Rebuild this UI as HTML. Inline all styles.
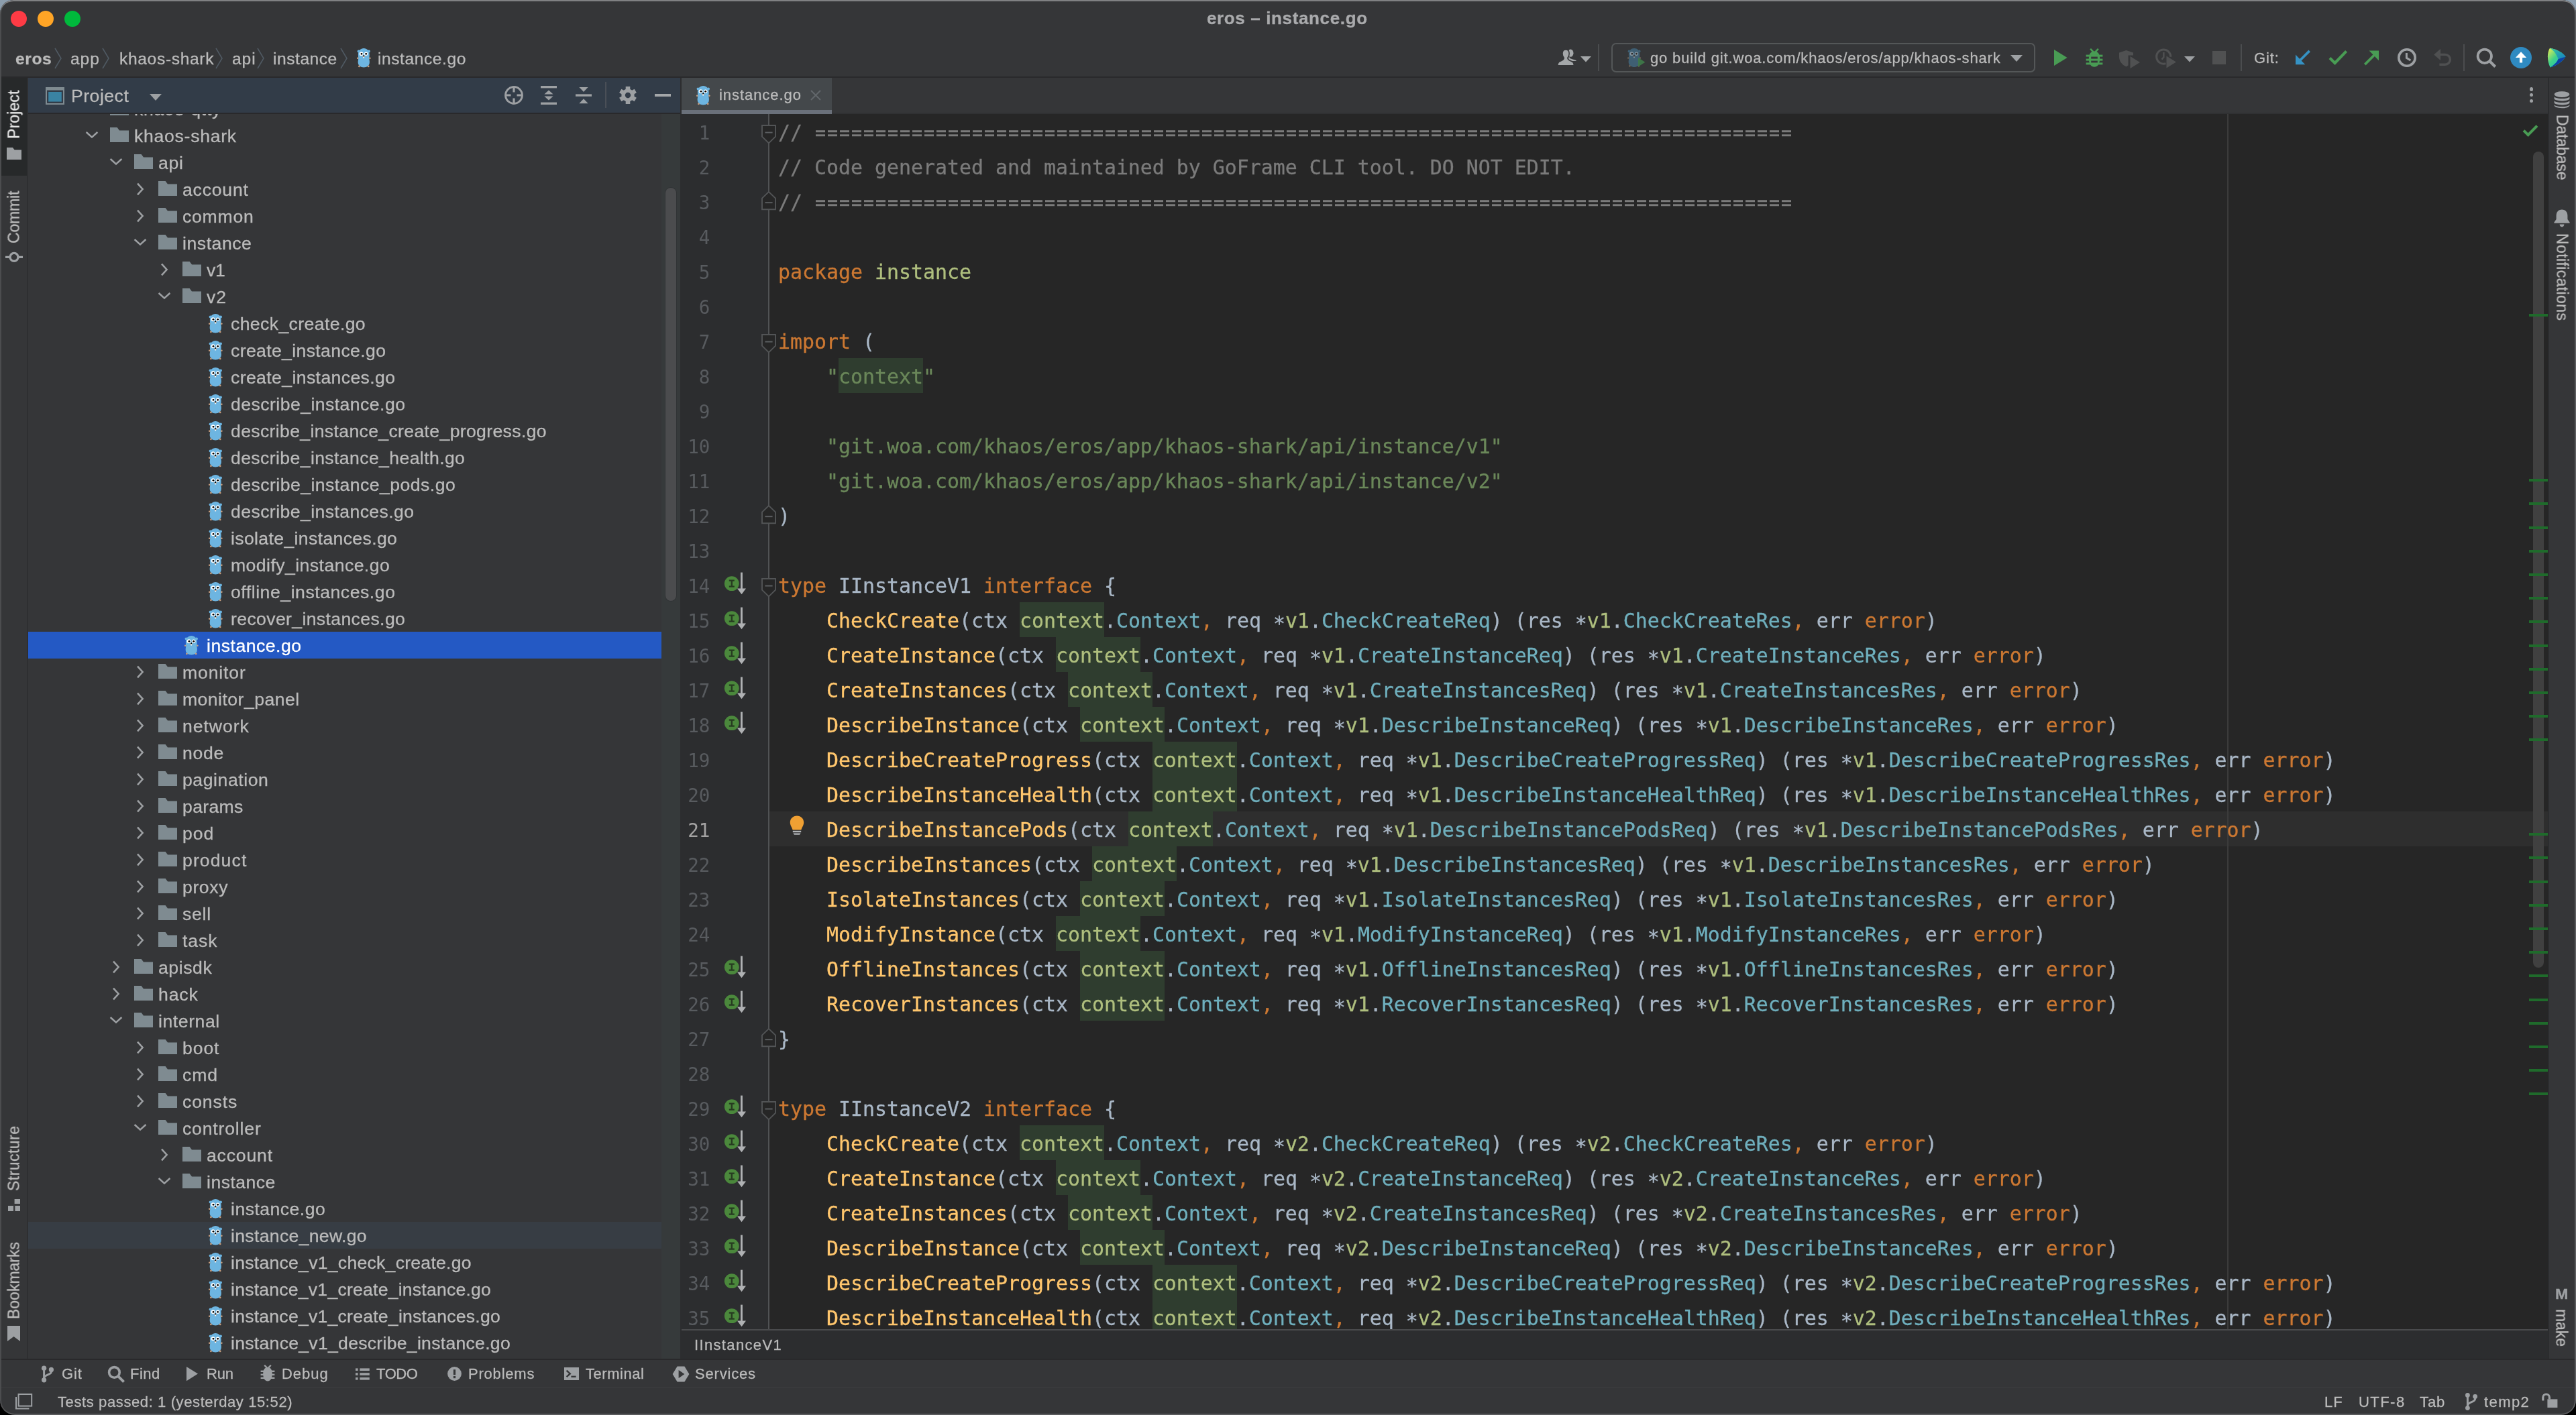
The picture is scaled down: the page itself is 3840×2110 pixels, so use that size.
<!DOCTYPE html>
<html lang="en"><head><meta charset="utf-8"><title>eros – instance.go</title>
<style>
html,body{margin:0;padding:0}
body{width:3840px;height:2110px;overflow:hidden;position:relative;
 background:linear-gradient(#8c9eae 0,#8c9eae 60px,#000 60px,#000 100%);
 font-family:"Liberation Sans",sans-serif}
#win{position:absolute;left:0;top:0;width:3840px;height:2110px;box-sizing:border-box;background:#353638;
 border-radius:20px 20px 22px 22px;overflow:hidden}
#win:after{content:"";position:absolute;left:0;top:0;right:0;bottom:0;border-radius:20px 20px 22px 22px;
 box-shadow:inset 0 2px 0 0 #808183,inset 2px 0 0 0 #4c4d4f,inset -2px 0 0 0 #5c5d5f,inset 0 -2px 0 0 #5a5b5d;pointer-events:none;z-index:50}
#win div,#win span.t,#win svg,#win pre{position:absolute}
span.t{white-space:pre;line-height:1;will-change:transform;-webkit-text-stroke:0.3px}
svg{overflow:visible}
#tree{left:42px;top:170px;width:972px;height:1856px;overflow:hidden}
#editor{background:#262626;overflow:hidden}
#editor .ln{will-change:transform;left:0;width:42.4px;height:52px;text-align:right;font:27.6px/52px "DejaVu Sans Mono","Liberation Mono",monospace}
pre.cl span.as{position:relative;top:4px}
pre.cl span.eq{-webkit-mask-image:repeating-linear-gradient(90deg,transparent 0,transparent 2.1px,#000 2.1px,#000 16px,transparent 16px,transparent 18px);mask-image:repeating-linear-gradient(90deg,transparent 0,transparent 2.1px,#000 2.1px,#000 16px,transparent 16px,transparent 18px)}
pre.cl{will-change:transform;-webkit-text-stroke:0.3px;margin:0;height:52px;font:29.9px/52px "DejaVu Sans Mono","Liberation Mono",monospace;color:#a9b7c6;white-space:pre}
</style></head>
<body>
<div id="win">
<div style="left:16px;top:16px;width:24px;height:24px;border-radius:50%;background:#fe3b45"></div>
<div style="left:56px;top:16px;width:24px;height:24px;border-radius:50%;background:#ffa526"></div>
<div style="left:96px;top:16px;width:24px;height:24px;border-radius:50%;background:#00b93c"></div>
<span class="t " style="left:1799.43px;top:13.99px;font-size:26px;color:#a9aaac;letter-spacing:0.632px;font-weight:bold;">eros – instance.go</span>
<div style="left:0px;top:114px;width:3840px;height:2px;background:#29292b;"></div>
<span class="t " style="left:23.49px;top:76.18px;font-size:24.6px;color:#bbbbbb;letter-spacing:0.617px;font-weight:bold;">eros</span>
<svg style="left:80.6px;top:71px;" width="12" height="32" viewBox="0 0 12 32"><path d="M1 1 L10 16 L1 31" fill="none" stroke="#505a63" stroke-width="1.6"/></svg>
<span class="t " style="left:105.39px;top:76.18px;font-size:24.6px;color:#bbbbbb;letter-spacing:0.900px;">app</span>
<svg style="left:152px;top:71px;" width="12" height="32" viewBox="0 0 12 32"><path d="M1 1 L10 16 L1 31" fill="none" stroke="#505a63" stroke-width="1.6"/></svg>
<span class="t " style="left:177.69px;top:76.18px;font-size:24.6px;color:#bbbbbb;letter-spacing:0.652px;">khaos-shark</span>
<svg style="left:320.6px;top:71px;" width="12" height="32" viewBox="0 0 12 32"><path d="M1 1 L10 16 L1 31" fill="none" stroke="#505a63" stroke-width="1.6"/></svg>
<span class="t " style="left:345.59px;top:76.18px;font-size:24.6px;color:#bbbbbb;letter-spacing:0.900px;">api</span>
<svg style="left:382.8px;top:71px;" width="12" height="32" viewBox="0 0 12 32"><path d="M1 1 L10 16 L1 31" fill="none" stroke="#505a63" stroke-width="1.6"/></svg>
<span class="t " style="left:407.49px;top:76.18px;font-size:24.6px;color:#bbbbbb;letter-spacing:0.527px;">instance</span>
<svg style="left:506.8px;top:71px;" width="12" height="32" viewBox="0 0 12 32"><path d="M1 1 L10 16 L1 31" fill="none" stroke="#505a63" stroke-width="1.6"/></svg>
<svg style="left:531.8px;top:71.8px;" width="20.6" height="28.4" viewBox="0 0 20.6 28.4"><circle cx="2.6" cy="4.4" r="2" fill="#6db5e1"/><circle cx="18" cy="4.4" r="2" fill="#6db5e1"/><path d="M1.9 9.6 C1.9 3.4 5.6 0 10.3 0 C15 0 18.7 3.4 18.7 9.6 C18.7 12.5 18.3 14 18.5 16.5 C19 19.5 19 20.5 18.8 22 C18.4 26 14.6 28.4 10.3 28.4 C6 28.4 2.2 26 1.8 22 C1.6 20.5 1.6 19.5 2.1 16.5 C2.3 14 1.9 12.5 1.9 9.6 Z" fill="#6db5e1"/><circle cx="1.2" cy="14.8" r="1.25" fill="#c79f80"/><circle cx="19.4" cy="14.8" r="1.25" fill="#c79f80"/><circle cx="3.4" cy="26.9" r="1.35" fill="#c79f80"/><circle cx="17.2" cy="26.9" r="1.35" fill="#c79f80"/><circle cx="6.6" cy="8.3" r="2.95" fill="#ffffff"/><circle cx="13.7" cy="8.3" r="2.8" fill="#ffffff"/><circle cx="7" cy="8.3" r="1.4" fill="#000000"/><circle cx="13.7" cy="8.3" r="1.4" fill="#000000"/><ellipse cx="10.2" cy="12.2" rx="1.7" ry="1.1" fill="#c79f80"/><rect x="9.3" y="12.7" width="1.8" height="1.8" fill="#ffffff"/><circle cx="10.2" cy="11.3" r="0.95" fill="#000000"/></svg>
<span class="t " style="left:563.19px;top:76.18px;font-size:24.6px;color:#bbbbbb;letter-spacing:0.559px;">instance.go</span>
<svg style="left:2320px;top:72px;" width="32" height="26" viewBox="0 0 32 26"><g fill="#a4a7a9"><ellipse cx="21.2" cy="7.2" rx="4.3" ry="5.6"/><path d="M18.5 11 C19.5 15 21.5 15.6 24.4 16.4 C27.6 17.2 29.8 17.5 30 19.1 L18 19.1 Z"/></g><path d="M1.7 26.5 C1.9 20.5 4.5 19.5 8 18.2 C10.5 17.2 11.3 16 11.3 14.2 C9.8 12.6 9 10.4 9 8 C9 4.4 11 1.9 14.1 1.9 C17.2 1.9 19.2 4.4 19.2 8 C19.2 10.4 18.4 12.6 16.9 14.2 C16.9 16 17.7 17.2 20.2 18.2 C23.7 19.5 26.3 20.5 26.5 26.5 Z" fill="#a4a7a9" stroke="#353638" stroke-width="1.5"/><rect x="0" y="25" width="32" height="3" fill="#353638"/></svg>
<svg style="left:2356px;top:83.6px;" width="16" height="9" viewBox="0 0 16 9"><path d="M0 0 H16 L8 8.6 Z" fill="#a4a7a9"/></svg>
<div style="left:2382px;top:66px;width:2px;height:40px;background:#4b4d4f;"></div>
<div style="left:2402px;top:64px;width:632px;height:44px;box-sizing:border-box;border:2px solid #545758;border-radius:7px"></div>
<svg style="left:2425.8px;top:71.8px;" width="20.2" height="28" viewBox="0 0 20.6 28.4"><circle cx="2.6" cy="4.4" r="2" fill="#3f5f73"/><circle cx="18" cy="4.4" r="2" fill="#3f5f73"/><path d="M1.9 9.6 C1.9 3.4 5.6 0 10.3 0 C15 0 18.7 3.4 18.7 9.6 C18.7 12.5 18.3 14 18.5 16.5 C19 19.5 19 20.5 18.8 22 C18.4 26 14.6 28.4 10.3 28.4 C6 28.4 2.2 26 1.8 22 C1.6 20.5 1.6 19.5 2.1 16.5 C2.3 14 1.9 12.5 1.9 9.6 Z" fill="#3f5f73"/><circle cx="1.2" cy="14.8" r="1.25" fill="#6b6258"/><circle cx="19.4" cy="14.8" r="1.25" fill="#6b6258"/><circle cx="3.4" cy="26.9" r="1.35" fill="#6b6258"/><circle cx="17.2" cy="26.9" r="1.35" fill="#6b6258"/><circle cx="6.6" cy="8.3" r="2.95" fill="#8796a0"/><circle cx="13.7" cy="8.3" r="2.8" fill="#8796a0"/><circle cx="7" cy="8.3" r="1.4" fill="#2b2b2b"/><circle cx="13.7" cy="8.3" r="1.4" fill="#2b2b2b"/><ellipse cx="10.2" cy="12.2" rx="1.7" ry="1.1" fill="#6b6258"/><rect x="9.3" y="12.7" width="1.8" height="1.8" fill="#8796a0"/><circle cx="10.2" cy="11.3" r="0.95" fill="#2b2b2b"/></svg>
<svg style="left:2441.9px;top:86.4px;" width="11" height="14" viewBox="0 0 11 14"><path d="M0 0 L10.4 6.8 L0 13.4 Z" fill="#3e7949" opacity=".92"/></svg>
<span class="t " style="left:2459.61px;top:75.58px;font-size:22.0px;color:#bbbbbb;letter-spacing:0.842px;">go build git.woa.com/khaos/eros/app/khaos-shark</span>
<svg style="left:2997px;top:82px;" width="18" height="10" viewBox="0 0 18 10"><path d="M0 0 H18 L9 10 Z" fill="#9da0a3"/></svg>
<svg style="left:3062px;top:74px;" width="20" height="24" viewBox="0 0 20 24"><path d="M0 0 L19.6 12 L0 24 Z" fill="#499c54"/></svg>
<svg style="left:3109px;top:72px;" width="26" height="28" viewBox="0 0 26 28"><g fill="#499c54"><path d="M6.2 1.6 L8 0 L13 5 L18 0 L19.8 1.6 L15.5 6.5 H10.5 Z"/><path d="M13 4.6 C18.6 4.6 21.2 9 21.2 15.5 C21.2 23 18 27.8 13 27.8 C8 27.8 4.8 23 4.8 15.5 C4.8 9 7.4 4.6 13 4.6 Z"/><rect x="0.6" y="9.6" width="24.8" height="3"/><rect x="0.6" y="15.6" width="24.8" height="3"/><rect x="0.6" y="21.4" width="24.8" height="3"/></g><rect x="8.2" y="12.6" width="9.6" height="3" fill="#353638"/><rect x="8.2" y="18.6" width="9.6" height="2.8" fill="#353638"/></svg>
<svg style="left:3159px;top:75px;" width="32" height="27" viewBox="0 0 32 27"><g fill="#505152"><path d="M10.5 0 L21 3.4 V7.5 H13.5 V22.5 C12.6 23.3 11.6 23.9 10.5 24.4 C4.4 21.6 0 16.5 0 10 V3.4 Z"/><path d="M16.5 9 L31 18 L16.5 27 Z"/></g></svg>
<svg style="left:3213px;top:72px;" width="32" height="30" viewBox="0 0 32 30"><g fill="none" stroke="#505152" stroke-width="3"><path d="M15.5 22.6 A10.6 10.6 0 1 1 22.8 12.8"/><path d="M12.4 6 V13.2 L9.4 16.6" stroke-width="2.4"/></g><path d="M16.5 11.5 L31 20.5 L16.5 29.5 Z" fill="#505152"/></svg>
<svg style="left:3256px;top:83.5px;" width="16" height="9" viewBox="0 0 16 9"><path d="M0 0 H16 L8 8.6 Z" fill="#9da0a3"/></svg>
<div style="left:3298px;top:76px;width:20px;height:20px;background:#505152;"></div>
<div style="left:3340px;top:66px;width:2px;height:40px;background:#4b4d4f;"></div>
<span class="t " style="left:3359.91px;top:75.58px;font-size:22.0px;color:#bbbbbb;letter-spacing:0.900px;">Git:</span>
<svg style="left:3421px;top:74px;" width="24" height="23" viewBox="0 0 24 23"><g fill="#3592c4"><path d="M1 22.2 V7.6 L15.2 22.2 Z"/><path d="M20.4 0.6 L23 3.2 L8.4 17.8 L5.8 15.2 Z"/></g></svg>
<svg style="left:3471px;top:74px;" width="29" height="23" viewBox="0 0 29 23"><path d="M2 12.6 L9.6 20 L26.6 2.4" fill="none" stroke="#499c54" stroke-width="4.2"/></svg>
<svg style="left:3523px;top:75px;" width="24" height="23" viewBox="0 0 24 23"><g fill="#499c54"><path d="M23 0.6 V15.2 L8.6 0.6 Z"/><path d="M3.6 22.4 L1 19.8 L15.6 5.2 L18.2 7.8 Z"/></g></svg>
<svg style="left:3572px;top:70px;" width="32" height="32" viewBox="0 0 32 32"><g fill="none" stroke="#9da0a3"><circle cx="16" cy="16" r="12.2" stroke-width="3.6"/><path d="M15.4 9 V16.4 L21.4 20" stroke-width="3"/></g></svg>
<svg style="left:3627px;top:71px;" width="28" height="28" viewBox="0 0 28 28"><path d="M10.5 10.4 H18 A7.4 7.4 0 0 1 18 25.2 H9.4" fill="none" stroke="#4f5051" stroke-width="3.4"/><path d="M1.2 10.4 L11 1.8 V19 Z" fill="#4f5051"/></svg>
<div style="left:3672px;top:66px;width:2px;height:40px;background:#4b4d4f;"></div>
<svg style="left:3690px;top:70px;" width="32" height="32" viewBox="0 0 32 32"><g fill="none" stroke="#9da0a3"><circle cx="13.8" cy="13.8" r="10.2" stroke-width="3.8"/><path d="M20.6 20.6 L29.6 29.6" stroke-width="4.2"/></g></svg>
<svg style="left:3742px;top:70px;" width="32" height="32" viewBox="0 0 32 32"><circle cx="16" cy="16" r="16" fill="#2f8ac1"/><path d="M16 7.2 L24.2 16 H18.1 V23.6 H13.9 V16 H7.8 Z" fill="#ffffff"/></svg>
<svg style="left:3796px;top:71px;" width="29" height="30" viewBox="0 0 29 30"><defs><linearGradient id="lg1" x1="0" y1="0" x2="1" y2="1"><stop offset="0" stop-color="#f5ee4e"/><stop offset=".45" stop-color="#3fd28a"/><stop offset="1" stop-color="#12b5c9"/></linearGradient><linearGradient id="lg2" x1="0" y1="0" x2="1" y2="1"><stop offset="0" stop-color="#2bc6a0"/><stop offset="1" stop-color="#1678c8"/></linearGradient></defs><path d="M5 0.8 C14 2 23 6.5 28.6 13.4 C23 22 14 27.5 5.6 29.4 C1.6 22 0 9 5 0.8 Z" fill="url(#lg1)"/><path d="M5 0.8 C14 2 23 6.5 28.6 13.4 L17.5 17 C15 9.5 10.5 4 5 0.8 Z" fill="url(#lg2)" opacity=".9"/><path d="M28.6 13.4 C23 22 14 27.5 5.6 29.4 C11 26 15.5 22 17.5 17 Z" fill="#0d3fa6"/></svg>
<div style="left:40px;top:116px;width:2px;height:1911px;background:#2e2f31;"></div>
<div style="left:2px;top:116px;width:38px;height:146px;background:#27292a;"></div>
<span class="t" style="left:21.40px;top:206.50px;font-size:23px;color:#e6e6e6;letter-spacing:0.119px;transform-origin:0 0;transform:rotate(-90deg) translateY(-50%);line-height:1">Project</span>
<svg style="left:10px;top:220px;" width="22" height="18" viewBox="0 0 22 18"><path d="M0 0 H9 L11.6 3.6 H22 V18 H0 Z" fill="#9da0a3"/></svg>
<span class="t" style="left:20.80px;top:362.50px;font-size:23px;color:#bbbbbb;letter-spacing:-0.164px;transform-origin:0 0;transform:rotate(-90deg) translateY(-50%);line-height:1">Commit</span>
<svg style="left:8px;top:370px;" width="26" height="26" viewBox="0 0 26 26"><g fill="none" stroke="#9da0a3" stroke-width="3.4"><circle cx="13" cy="13.4" r="6"/><path d="M0 13.4 H7 M19 13.4 H26"/></g></svg>
<span class="t" style="left:20.80px;top:1775.50px;font-size:23px;color:#bbbbbb;letter-spacing:0.460px;transform-origin:0 0;transform:rotate(-90deg) translateY(-50%);line-height:1">Structure</span>
<svg style="left:12px;top:1788px;" width="19" height="19" viewBox="0 0 19 19"><g fill="#9da0a3"><rect x="9.6" y="0" width="8.4" height="7"/><rect x="0" y="10" width="8" height="8"/><rect x="10.4" y="10" width="7.6" height="8"/></g></svg>
<span class="t" style="left:20.80px;top:1966.80px;font-size:23px;color:#bbbbbb;letter-spacing:-0.005px;transform-origin:0 0;transform:rotate(-90deg) translateY(-50%);line-height:1">Bookmarks</span>
<svg style="left:11px;top:1977px;" width="19" height="24" viewBox="0 0 19 24"><path d="M0 0 H19 V23 L9.5 16 L0 23 Z" fill="#9da0a3"/></svg>
<div style="left:42px;top:116px;width:972px;height:52px;background:#323c48;"></div>
<div style="left:42px;top:168px;width:972px;height:2px;background:#29292b;"></div>
<svg style="left:68px;top:130px;" width="28" height="26" viewBox="0 0 28 26"><rect x="0" y="0" width="28" height="26" fill="#7f8b91"/><rect x="2" y="4.6" width="24" height="19.4" fill="#323c48"/><rect x="4.2" y="7" width="19.6" height="14.6" fill="#3a83a3"/></svg>
<span class="t " style="left:106.30px;top:129.68px;font-size:26.6px;color:#bbbbbb;letter-spacing:0.501px;">Project</span>
<svg style="left:223px;top:140px;" width="18" height="10" viewBox="0 0 18 10"><path d="M0 0 H18 L9 10 Z" fill="#9da0a3"/></svg>
<svg style="left:751px;top:127px;" width="30" height="30" viewBox="0 0 30 30"><g fill="none" stroke="#9da0a3" stroke-width="3"><circle cx="15" cy="15" r="12.4"/><path d="M15 2 V10.5 M15 19.5 V28 M2 15 H10.5 M19.5 15 H28" stroke-width="3.2"/></g></svg>
<svg style="left:805px;top:128px;" width="26" height="29" viewBox="0 0 26 29"><g fill="#9da0a3"><rect x="1" y="0" width="24" height="3.4"/><rect x="1" y="24.6" width="24" height="3.4"/><path d="M13 6.4 L19.6 12.4 H6.4 Z"/><path d="M13 21.6 L19.6 15.6 H6.4 Z"/></g></svg>
<svg style="left:857px;top:128px;" width="26" height="29" viewBox="0 0 26 29"><g fill="#9da0a3"><rect x="1" y="12.4" width="24" height="3.4"/><path d="M13 9 L19.6 2 H6.4 Z"/><path d="M13 19.2 L19.6 26.2 H6.4 Z"/></g></svg>
<div style="left:902px;top:122px;width:2px;height:39px;background:#4a4f57;"></div>
<svg style="left:922px;top:128px;" width="28" height="28" viewBox="0 0 28 28"><g transform="translate(14 14)" fill="#9da0a3"><rect x="-3.3" y="-13" width="6.6" height="7" transform="rotate(0)"/><rect x="-3.3" y="-13" width="6.6" height="7" transform="rotate(60)"/><rect x="-3.3" y="-13" width="6.6" height="7" transform="rotate(120)"/><rect x="-3.3" y="-13" width="6.6" height="7" transform="rotate(180)"/><rect x="-3.3" y="-13" width="6.6" height="7" transform="rotate(240)"/><rect x="-3.3" y="-13" width="6.6" height="7" transform="rotate(300)"/><path fill-rule="evenodd" d="M0 -9.6 A9.6 9.6 0 1 0 0.01 -9.6 Z M0 -4.2 A4.2 4.2 0 1 1 -0.01 -4.2 Z"/></g></svg>
<div style="left:976px;top:140px;width:24px;height:4px;background:#a4a7a9;"></div>
<div id="tree">
<svg style="left:122px;top:-20px;" width="28" height="22" viewBox="0 0 28 22"><path d="M0 0 H10.6 L14 4.4 H28 V22 H0 Z" fill="#7f8b91"/></svg>
<span class="t " style="left:157.70px;top:-20.02px;font-size:26.6px;color:#bbbbbb;letter-spacing:0.742px;">khaos-qtty</span>
<svg style="left:122px;top:20px;" width="28" height="22" viewBox="0 0 28 22"><path d="M0 0 H10.6 L14 4.4 H28 V22 H0 Z" fill="#7f8b91"/></svg>
<svg style="left:84px;top:24px;" width="22" height="14" viewBox="0 0 22 14"><path d="M2.6 3 L11 10.6 L19.4 3" fill="none" stroke="#9da0a3" stroke-width="2.6"/></svg>
<span class="t " style="left:157.70px;top:19.98px;font-size:26.6px;color:#bbbbbb;letter-spacing:0.731px;">khaos-shark</span>
<svg style="left:158px;top:60px;" width="28" height="22" viewBox="0 0 28 22"><path d="M0 0 H10.6 L14 4.4 H28 V22 H0 Z" fill="#7f8b91"/></svg>
<svg style="left:120px;top:64px;" width="22" height="14" viewBox="0 0 22 14"><path d="M2.6 3 L11 10.6 L19.4 3" fill="none" stroke="#9da0a3" stroke-width="2.6"/></svg>
<span class="t " style="left:193.70px;top:59.98px;font-size:26.6px;color:#bbbbbb;letter-spacing:0.748px;">api</span>
<svg style="left:194px;top:100px;" width="28" height="22" viewBox="0 0 28 22"><path d="M0 0 H10.6 L14 4.4 H28 V22 H0 Z" fill="#7f8b91"/></svg>
<svg style="left:159.5px;top:101px;" width="14" height="22" viewBox="0 0 14 22"><path d="M3 2.6 L10.6 11 L3 19.4" fill="none" stroke="#9da0a3" stroke-width="2.6"/></svg>
<span class="t " style="left:229.70px;top:99.98px;font-size:26.6px;color:#bbbbbb;letter-spacing:0.788px;">account</span>
<svg style="left:194px;top:140px;" width="28" height="22" viewBox="0 0 28 22"><path d="M0 0 H10.6 L14 4.4 H28 V22 H0 Z" fill="#7f8b91"/></svg>
<svg style="left:159.5px;top:141px;" width="14" height="22" viewBox="0 0 14 22"><path d="M3 2.6 L10.6 11 L3 19.4" fill="none" stroke="#9da0a3" stroke-width="2.6"/></svg>
<span class="t " style="left:229.70px;top:139.98px;font-size:26.6px;color:#bbbbbb;letter-spacing:0.759px;">common</span>
<svg style="left:194px;top:180px;" width="28" height="22" viewBox="0 0 28 22"><path d="M0 0 H10.6 L14 4.4 H28 V22 H0 Z" fill="#7f8b91"/></svg>
<svg style="left:156px;top:184px;" width="22" height="14" viewBox="0 0 22 14"><path d="M2.6 3 L11 10.6 L19.4 3" fill="none" stroke="#9da0a3" stroke-width="2.6"/></svg>
<span class="t " style="left:229.70px;top:179.98px;font-size:26.6px;color:#bbbbbb;letter-spacing:0.545px;">instance</span>
<svg style="left:230px;top:220px;" width="28" height="22" viewBox="0 0 28 22"><path d="M0 0 H10.6 L14 4.4 H28 V22 H0 Z" fill="#7f8b91"/></svg>
<svg style="left:195.5px;top:221px;" width="14" height="22" viewBox="0 0 14 22"><path d="M3 2.6 L10.6 11 L3 19.4" fill="none" stroke="#9da0a3" stroke-width="2.6"/></svg>
<span class="t " style="left:265.70px;top:219.98px;font-size:26.6px;color:#bbbbbb;letter-spacing:-0.400px;">v1</span>
<svg style="left:230px;top:260px;" width="28" height="22" viewBox="0 0 28 22"><path d="M0 0 H10.6 L14 4.4 H28 V22 H0 Z" fill="#7f8b91"/></svg>
<svg style="left:192px;top:264px;" width="22" height="14" viewBox="0 0 22 14"><path d="M2.6 3 L11 10.6 L19.4 3" fill="none" stroke="#9da0a3" stroke-width="2.6"/></svg>
<span class="t " style="left:265.70px;top:259.98px;font-size:26.6px;color:#bbbbbb;letter-spacing:0.900px;">v2</span>
<svg style="left:269.2px;top:297.8px;" width="20.6" height="28.4" viewBox="0 0 20.6 28.4"><circle cx="2.6" cy="4.4" r="2" fill="#6db5e1"/><circle cx="18" cy="4.4" r="2" fill="#6db5e1"/><path d="M1.9 9.6 C1.9 3.4 5.6 0 10.3 0 C15 0 18.7 3.4 18.7 9.6 C18.7 12.5 18.3 14 18.5 16.5 C19 19.5 19 20.5 18.8 22 C18.4 26 14.6 28.4 10.3 28.4 C6 28.4 2.2 26 1.8 22 C1.6 20.5 1.6 19.5 2.1 16.5 C2.3 14 1.9 12.5 1.9 9.6 Z" fill="#6db5e1"/><circle cx="1.2" cy="14.8" r="1.25" fill="#c79f80"/><circle cx="19.4" cy="14.8" r="1.25" fill="#c79f80"/><circle cx="3.4" cy="26.9" r="1.35" fill="#c79f80"/><circle cx="17.2" cy="26.9" r="1.35" fill="#c79f80"/><circle cx="6.6" cy="8.3" r="2.95" fill="#ffffff"/><circle cx="13.7" cy="8.3" r="2.8" fill="#ffffff"/><circle cx="7" cy="8.3" r="1.4" fill="#000000"/><circle cx="13.7" cy="8.3" r="1.4" fill="#000000"/><ellipse cx="10.2" cy="12.2" rx="1.7" ry="1.1" fill="#c79f80"/><rect x="9.3" y="12.7" width="1.8" height="1.8" fill="#ffffff"/><circle cx="10.2" cy="11.3" r="0.95" fill="#000000"/></svg>
<span class="t " style="left:301.70px;top:299.98px;font-size:26.6px;color:#bbbbbb;letter-spacing:0.393px;">check_create.go</span>
<svg style="left:269.2px;top:337.8px;" width="20.6" height="28.4" viewBox="0 0 20.6 28.4"><circle cx="2.6" cy="4.4" r="2" fill="#6db5e1"/><circle cx="18" cy="4.4" r="2" fill="#6db5e1"/><path d="M1.9 9.6 C1.9 3.4 5.6 0 10.3 0 C15 0 18.7 3.4 18.7 9.6 C18.7 12.5 18.3 14 18.5 16.5 C19 19.5 19 20.5 18.8 22 C18.4 26 14.6 28.4 10.3 28.4 C6 28.4 2.2 26 1.8 22 C1.6 20.5 1.6 19.5 2.1 16.5 C2.3 14 1.9 12.5 1.9 9.6 Z" fill="#6db5e1"/><circle cx="1.2" cy="14.8" r="1.25" fill="#c79f80"/><circle cx="19.4" cy="14.8" r="1.25" fill="#c79f80"/><circle cx="3.4" cy="26.9" r="1.35" fill="#c79f80"/><circle cx="17.2" cy="26.9" r="1.35" fill="#c79f80"/><circle cx="6.6" cy="8.3" r="2.95" fill="#ffffff"/><circle cx="13.7" cy="8.3" r="2.8" fill="#ffffff"/><circle cx="7" cy="8.3" r="1.4" fill="#000000"/><circle cx="13.7" cy="8.3" r="1.4" fill="#000000"/><ellipse cx="10.2" cy="12.2" rx="1.7" ry="1.1" fill="#c79f80"/><rect x="9.3" y="12.7" width="1.8" height="1.8" fill="#ffffff"/><circle cx="10.2" cy="11.3" r="0.95" fill="#000000"/></svg>
<span class="t " style="left:301.70px;top:339.98px;font-size:26.6px;color:#bbbbbb;letter-spacing:0.366px;">create_instance.go</span>
<svg style="left:269.2px;top:377.8px;" width="20.6" height="28.4" viewBox="0 0 20.6 28.4"><circle cx="2.6" cy="4.4" r="2" fill="#6db5e1"/><circle cx="18" cy="4.4" r="2" fill="#6db5e1"/><path d="M1.9 9.6 C1.9 3.4 5.6 0 10.3 0 C15 0 18.7 3.4 18.7 9.6 C18.7 12.5 18.3 14 18.5 16.5 C19 19.5 19 20.5 18.8 22 C18.4 26 14.6 28.4 10.3 28.4 C6 28.4 2.2 26 1.8 22 C1.6 20.5 1.6 19.5 2.1 16.5 C2.3 14 1.9 12.5 1.9 9.6 Z" fill="#6db5e1"/><circle cx="1.2" cy="14.8" r="1.25" fill="#c79f80"/><circle cx="19.4" cy="14.8" r="1.25" fill="#c79f80"/><circle cx="3.4" cy="26.9" r="1.35" fill="#c79f80"/><circle cx="17.2" cy="26.9" r="1.35" fill="#c79f80"/><circle cx="6.6" cy="8.3" r="2.95" fill="#ffffff"/><circle cx="13.7" cy="8.3" r="2.8" fill="#ffffff"/><circle cx="7" cy="8.3" r="1.4" fill="#000000"/><circle cx="13.7" cy="8.3" r="1.4" fill="#000000"/><ellipse cx="10.2" cy="12.2" rx="1.7" ry="1.1" fill="#c79f80"/><rect x="9.3" y="12.7" width="1.8" height="1.8" fill="#ffffff"/><circle cx="10.2" cy="11.3" r="0.95" fill="#000000"/></svg>
<span class="t " style="left:301.70px;top:379.98px;font-size:26.6px;color:#bbbbbb;letter-spacing:0.390px;">create_instances.go</span>
<svg style="left:269.2px;top:417.8px;" width="20.6" height="28.4" viewBox="0 0 20.6 28.4"><circle cx="2.6" cy="4.4" r="2" fill="#6db5e1"/><circle cx="18" cy="4.4" r="2" fill="#6db5e1"/><path d="M1.9 9.6 C1.9 3.4 5.6 0 10.3 0 C15 0 18.7 3.4 18.7 9.6 C18.7 12.5 18.3 14 18.5 16.5 C19 19.5 19 20.5 18.8 22 C18.4 26 14.6 28.4 10.3 28.4 C6 28.4 2.2 26 1.8 22 C1.6 20.5 1.6 19.5 2.1 16.5 C2.3 14 1.9 12.5 1.9 9.6 Z" fill="#6db5e1"/><circle cx="1.2" cy="14.8" r="1.25" fill="#c79f80"/><circle cx="19.4" cy="14.8" r="1.25" fill="#c79f80"/><circle cx="3.4" cy="26.9" r="1.35" fill="#c79f80"/><circle cx="17.2" cy="26.9" r="1.35" fill="#c79f80"/><circle cx="6.6" cy="8.3" r="2.95" fill="#ffffff"/><circle cx="13.7" cy="8.3" r="2.8" fill="#ffffff"/><circle cx="7" cy="8.3" r="1.4" fill="#000000"/><circle cx="13.7" cy="8.3" r="1.4" fill="#000000"/><ellipse cx="10.2" cy="12.2" rx="1.7" ry="1.1" fill="#c79f80"/><rect x="9.3" y="12.7" width="1.8" height="1.8" fill="#ffffff"/><circle cx="10.2" cy="11.3" r="0.95" fill="#000000"/></svg>
<span class="t " style="left:301.70px;top:419.98px;font-size:26.6px;color:#bbbbbb;letter-spacing:0.453px;">describe_instance.go</span>
<svg style="left:269.2px;top:457.8px;" width="20.6" height="28.4" viewBox="0 0 20.6 28.4"><circle cx="2.6" cy="4.4" r="2" fill="#6db5e1"/><circle cx="18" cy="4.4" r="2" fill="#6db5e1"/><path d="M1.9 9.6 C1.9 3.4 5.6 0 10.3 0 C15 0 18.7 3.4 18.7 9.6 C18.7 12.5 18.3 14 18.5 16.5 C19 19.5 19 20.5 18.8 22 C18.4 26 14.6 28.4 10.3 28.4 C6 28.4 2.2 26 1.8 22 C1.6 20.5 1.6 19.5 2.1 16.5 C2.3 14 1.9 12.5 1.9 9.6 Z" fill="#6db5e1"/><circle cx="1.2" cy="14.8" r="1.25" fill="#c79f80"/><circle cx="19.4" cy="14.8" r="1.25" fill="#c79f80"/><circle cx="3.4" cy="26.9" r="1.35" fill="#c79f80"/><circle cx="17.2" cy="26.9" r="1.35" fill="#c79f80"/><circle cx="6.6" cy="8.3" r="2.95" fill="#ffffff"/><circle cx="13.7" cy="8.3" r="2.8" fill="#ffffff"/><circle cx="7" cy="8.3" r="1.4" fill="#000000"/><circle cx="13.7" cy="8.3" r="1.4" fill="#000000"/><ellipse cx="10.2" cy="12.2" rx="1.7" ry="1.1" fill="#c79f80"/><rect x="9.3" y="12.7" width="1.8" height="1.8" fill="#ffffff"/><circle cx="10.2" cy="11.3" r="0.95" fill="#000000"/></svg>
<span class="t " style="left:301.70px;top:459.98px;font-size:26.6px;color:#bbbbbb;letter-spacing:0.351px;">describe_instance_create_progress.go</span>
<svg style="left:269.2px;top:497.8px;" width="20.6" height="28.4" viewBox="0 0 20.6 28.4"><circle cx="2.6" cy="4.4" r="2" fill="#6db5e1"/><circle cx="18" cy="4.4" r="2" fill="#6db5e1"/><path d="M1.9 9.6 C1.9 3.4 5.6 0 10.3 0 C15 0 18.7 3.4 18.7 9.6 C18.7 12.5 18.3 14 18.5 16.5 C19 19.5 19 20.5 18.8 22 C18.4 26 14.6 28.4 10.3 28.4 C6 28.4 2.2 26 1.8 22 C1.6 20.5 1.6 19.5 2.1 16.5 C2.3 14 1.9 12.5 1.9 9.6 Z" fill="#6db5e1"/><circle cx="1.2" cy="14.8" r="1.25" fill="#c79f80"/><circle cx="19.4" cy="14.8" r="1.25" fill="#c79f80"/><circle cx="3.4" cy="26.9" r="1.35" fill="#c79f80"/><circle cx="17.2" cy="26.9" r="1.35" fill="#c79f80"/><circle cx="6.6" cy="8.3" r="2.95" fill="#ffffff"/><circle cx="13.7" cy="8.3" r="2.8" fill="#ffffff"/><circle cx="7" cy="8.3" r="1.4" fill="#000000"/><circle cx="13.7" cy="8.3" r="1.4" fill="#000000"/><ellipse cx="10.2" cy="12.2" rx="1.7" ry="1.1" fill="#c79f80"/><rect x="9.3" y="12.7" width="1.8" height="1.8" fill="#ffffff"/><circle cx="10.2" cy="11.3" r="0.95" fill="#000000"/></svg>
<span class="t " style="left:301.70px;top:499.98px;font-size:26.6px;color:#bbbbbb;letter-spacing:0.397px;">describe_instance_health.go</span>
<svg style="left:269.2px;top:537.8px;" width="20.6" height="28.4" viewBox="0 0 20.6 28.4"><circle cx="2.6" cy="4.4" r="2" fill="#6db5e1"/><circle cx="18" cy="4.4" r="2" fill="#6db5e1"/><path d="M1.9 9.6 C1.9 3.4 5.6 0 10.3 0 C15 0 18.7 3.4 18.7 9.6 C18.7 12.5 18.3 14 18.5 16.5 C19 19.5 19 20.5 18.8 22 C18.4 26 14.6 28.4 10.3 28.4 C6 28.4 2.2 26 1.8 22 C1.6 20.5 1.6 19.5 2.1 16.5 C2.3 14 1.9 12.5 1.9 9.6 Z" fill="#6db5e1"/><circle cx="1.2" cy="14.8" r="1.25" fill="#c79f80"/><circle cx="19.4" cy="14.8" r="1.25" fill="#c79f80"/><circle cx="3.4" cy="26.9" r="1.35" fill="#c79f80"/><circle cx="17.2" cy="26.9" r="1.35" fill="#c79f80"/><circle cx="6.6" cy="8.3" r="2.95" fill="#ffffff"/><circle cx="13.7" cy="8.3" r="2.8" fill="#ffffff"/><circle cx="7" cy="8.3" r="1.4" fill="#000000"/><circle cx="13.7" cy="8.3" r="1.4" fill="#000000"/><ellipse cx="10.2" cy="12.2" rx="1.7" ry="1.1" fill="#c79f80"/><rect x="9.3" y="12.7" width="1.8" height="1.8" fill="#ffffff"/><circle cx="10.2" cy="11.3" r="0.95" fill="#000000"/></svg>
<span class="t " style="left:301.70px;top:539.98px;font-size:26.6px;color:#bbbbbb;letter-spacing:0.455px;">describe_instance_pods.go</span>
<svg style="left:269.2px;top:577.8px;" width="20.6" height="28.4" viewBox="0 0 20.6 28.4"><circle cx="2.6" cy="4.4" r="2" fill="#6db5e1"/><circle cx="18" cy="4.4" r="2" fill="#6db5e1"/><path d="M1.9 9.6 C1.9 3.4 5.6 0 10.3 0 C15 0 18.7 3.4 18.7 9.6 C18.7 12.5 18.3 14 18.5 16.5 C19 19.5 19 20.5 18.8 22 C18.4 26 14.6 28.4 10.3 28.4 C6 28.4 2.2 26 1.8 22 C1.6 20.5 1.6 19.5 2.1 16.5 C2.3 14 1.9 12.5 1.9 9.6 Z" fill="#6db5e1"/><circle cx="1.2" cy="14.8" r="1.25" fill="#c79f80"/><circle cx="19.4" cy="14.8" r="1.25" fill="#c79f80"/><circle cx="3.4" cy="26.9" r="1.35" fill="#c79f80"/><circle cx="17.2" cy="26.9" r="1.35" fill="#c79f80"/><circle cx="6.6" cy="8.3" r="2.95" fill="#ffffff"/><circle cx="13.7" cy="8.3" r="2.8" fill="#ffffff"/><circle cx="7" cy="8.3" r="1.4" fill="#000000"/><circle cx="13.7" cy="8.3" r="1.4" fill="#000000"/><ellipse cx="10.2" cy="12.2" rx="1.7" ry="1.1" fill="#c79f80"/><rect x="9.3" y="12.7" width="1.8" height="1.8" fill="#ffffff"/><circle cx="10.2" cy="11.3" r="0.95" fill="#000000"/></svg>
<span class="t " style="left:301.70px;top:579.98px;font-size:26.6px;color:#bbbbbb;letter-spacing:0.425px;">describe_instances.go</span>
<svg style="left:269.2px;top:617.8px;" width="20.6" height="28.4" viewBox="0 0 20.6 28.4"><circle cx="2.6" cy="4.4" r="2" fill="#6db5e1"/><circle cx="18" cy="4.4" r="2" fill="#6db5e1"/><path d="M1.9 9.6 C1.9 3.4 5.6 0 10.3 0 C15 0 18.7 3.4 18.7 9.6 C18.7 12.5 18.3 14 18.5 16.5 C19 19.5 19 20.5 18.8 22 C18.4 26 14.6 28.4 10.3 28.4 C6 28.4 2.2 26 1.8 22 C1.6 20.5 1.6 19.5 2.1 16.5 C2.3 14 1.9 12.5 1.9 9.6 Z" fill="#6db5e1"/><circle cx="1.2" cy="14.8" r="1.25" fill="#c79f80"/><circle cx="19.4" cy="14.8" r="1.25" fill="#c79f80"/><circle cx="3.4" cy="26.9" r="1.35" fill="#c79f80"/><circle cx="17.2" cy="26.9" r="1.35" fill="#c79f80"/><circle cx="6.6" cy="8.3" r="2.95" fill="#ffffff"/><circle cx="13.7" cy="8.3" r="2.8" fill="#ffffff"/><circle cx="7" cy="8.3" r="1.4" fill="#000000"/><circle cx="13.7" cy="8.3" r="1.4" fill="#000000"/><ellipse cx="10.2" cy="12.2" rx="1.7" ry="1.1" fill="#c79f80"/><rect x="9.3" y="12.7" width="1.8" height="1.8" fill="#ffffff"/><circle cx="10.2" cy="11.3" r="0.95" fill="#000000"/></svg>
<span class="t " style="left:301.70px;top:619.98px;font-size:26.6px;color:#bbbbbb;letter-spacing:0.361px;">isolate_instances.go</span>
<svg style="left:269.2px;top:657.8px;" width="20.6" height="28.4" viewBox="0 0 20.6 28.4"><circle cx="2.6" cy="4.4" r="2" fill="#6db5e1"/><circle cx="18" cy="4.4" r="2" fill="#6db5e1"/><path d="M1.9 9.6 C1.9 3.4 5.6 0 10.3 0 C15 0 18.7 3.4 18.7 9.6 C18.7 12.5 18.3 14 18.5 16.5 C19 19.5 19 20.5 18.8 22 C18.4 26 14.6 28.4 10.3 28.4 C6 28.4 2.2 26 1.8 22 C1.6 20.5 1.6 19.5 2.1 16.5 C2.3 14 1.9 12.5 1.9 9.6 Z" fill="#6db5e1"/><circle cx="1.2" cy="14.8" r="1.25" fill="#c79f80"/><circle cx="19.4" cy="14.8" r="1.25" fill="#c79f80"/><circle cx="3.4" cy="26.9" r="1.35" fill="#c79f80"/><circle cx="17.2" cy="26.9" r="1.35" fill="#c79f80"/><circle cx="6.6" cy="8.3" r="2.95" fill="#ffffff"/><circle cx="13.7" cy="8.3" r="2.8" fill="#ffffff"/><circle cx="7" cy="8.3" r="1.4" fill="#000000"/><circle cx="13.7" cy="8.3" r="1.4" fill="#000000"/><ellipse cx="10.2" cy="12.2" rx="1.7" ry="1.1" fill="#c79f80"/><rect x="9.3" y="12.7" width="1.8" height="1.8" fill="#ffffff"/><circle cx="10.2" cy="11.3" r="0.95" fill="#000000"/></svg>
<span class="t " style="left:301.70px;top:659.98px;font-size:26.6px;color:#bbbbbb;letter-spacing:0.447px;">modify_instance.go</span>
<svg style="left:269.2px;top:697.8px;" width="20.6" height="28.4" viewBox="0 0 20.6 28.4"><circle cx="2.6" cy="4.4" r="2" fill="#6db5e1"/><circle cx="18" cy="4.4" r="2" fill="#6db5e1"/><path d="M1.9 9.6 C1.9 3.4 5.6 0 10.3 0 C15 0 18.7 3.4 18.7 9.6 C18.7 12.5 18.3 14 18.5 16.5 C19 19.5 19 20.5 18.8 22 C18.4 26 14.6 28.4 10.3 28.4 C6 28.4 2.2 26 1.8 22 C1.6 20.5 1.6 19.5 2.1 16.5 C2.3 14 1.9 12.5 1.9 9.6 Z" fill="#6db5e1"/><circle cx="1.2" cy="14.8" r="1.25" fill="#c79f80"/><circle cx="19.4" cy="14.8" r="1.25" fill="#c79f80"/><circle cx="3.4" cy="26.9" r="1.35" fill="#c79f80"/><circle cx="17.2" cy="26.9" r="1.35" fill="#c79f80"/><circle cx="6.6" cy="8.3" r="2.95" fill="#ffffff"/><circle cx="13.7" cy="8.3" r="2.8" fill="#ffffff"/><circle cx="7" cy="8.3" r="1.4" fill="#000000"/><circle cx="13.7" cy="8.3" r="1.4" fill="#000000"/><ellipse cx="10.2" cy="12.2" rx="1.7" ry="1.1" fill="#c79f80"/><rect x="9.3" y="12.7" width="1.8" height="1.8" fill="#ffffff"/><circle cx="10.2" cy="11.3" r="0.95" fill="#000000"/></svg>
<span class="t " style="left:301.70px;top:699.98px;font-size:26.6px;color:#bbbbbb;letter-spacing:0.544px;">offline_instances.go</span>
<svg style="left:269.2px;top:737.8px;" width="20.6" height="28.4" viewBox="0 0 20.6 28.4"><circle cx="2.6" cy="4.4" r="2" fill="#6db5e1"/><circle cx="18" cy="4.4" r="2" fill="#6db5e1"/><path d="M1.9 9.6 C1.9 3.4 5.6 0 10.3 0 C15 0 18.7 3.4 18.7 9.6 C18.7 12.5 18.3 14 18.5 16.5 C19 19.5 19 20.5 18.8 22 C18.4 26 14.6 28.4 10.3 28.4 C6 28.4 2.2 26 1.8 22 C1.6 20.5 1.6 19.5 2.1 16.5 C2.3 14 1.9 12.5 1.9 9.6 Z" fill="#6db5e1"/><circle cx="1.2" cy="14.8" r="1.25" fill="#c79f80"/><circle cx="19.4" cy="14.8" r="1.25" fill="#c79f80"/><circle cx="3.4" cy="26.9" r="1.35" fill="#c79f80"/><circle cx="17.2" cy="26.9" r="1.35" fill="#c79f80"/><circle cx="6.6" cy="8.3" r="2.95" fill="#ffffff"/><circle cx="13.7" cy="8.3" r="2.8" fill="#ffffff"/><circle cx="7" cy="8.3" r="1.4" fill="#000000"/><circle cx="13.7" cy="8.3" r="1.4" fill="#000000"/><ellipse cx="10.2" cy="12.2" rx="1.7" ry="1.1" fill="#c79f80"/><rect x="9.3" y="12.7" width="1.8" height="1.8" fill="#ffffff"/><circle cx="10.2" cy="11.3" r="0.95" fill="#000000"/></svg>
<span class="t " style="left:301.70px;top:739.98px;font-size:26.6px;color:#bbbbbb;letter-spacing:0.371px;">recover_instances.go</span>
<div style="left:0px;top:772px;width:944px;height:40px;background:#2459c4;"></div>
<svg style="left:233.2px;top:777.8px;" width="20.6" height="28.4" viewBox="0 0 20.6 28.4"><circle cx="2.6" cy="4.4" r="2" fill="#6db5e1"/><circle cx="18" cy="4.4" r="2" fill="#6db5e1"/><path d="M1.9 9.6 C1.9 3.4 5.6 0 10.3 0 C15 0 18.7 3.4 18.7 9.6 C18.7 12.5 18.3 14 18.5 16.5 C19 19.5 19 20.5 18.8 22 C18.4 26 14.6 28.4 10.3 28.4 C6 28.4 2.2 26 1.8 22 C1.6 20.5 1.6 19.5 2.1 16.5 C2.3 14 1.9 12.5 1.9 9.6 Z" fill="#6db5e1"/><circle cx="1.2" cy="14.8" r="1.25" fill="#c79f80"/><circle cx="19.4" cy="14.8" r="1.25" fill="#c79f80"/><circle cx="3.4" cy="26.9" r="1.35" fill="#c79f80"/><circle cx="17.2" cy="26.9" r="1.35" fill="#c79f80"/><circle cx="6.6" cy="8.3" r="2.95" fill="#ffffff"/><circle cx="13.7" cy="8.3" r="2.8" fill="#ffffff"/><circle cx="7" cy="8.3" r="1.4" fill="#000000"/><circle cx="13.7" cy="8.3" r="1.4" fill="#000000"/><ellipse cx="10.2" cy="12.2" rx="1.7" ry="1.1" fill="#c79f80"/><rect x="9.3" y="12.7" width="1.8" height="1.8" fill="#ffffff"/><circle cx="10.2" cy="11.3" r="0.95" fill="#000000"/></svg>
<span class="t " style="left:265.70px;top:779.98px;font-size:26.6px;color:#ffffff;letter-spacing:0.504px;">instance.go</span>
<svg style="left:194px;top:820px;" width="28" height="22" viewBox="0 0 28 22"><path d="M0 0 H10.6 L14 4.4 H28 V22 H0 Z" fill="#7f8b91"/></svg>
<svg style="left:159.5px;top:821px;" width="14" height="22" viewBox="0 0 14 22"><path d="M3 2.6 L10.6 11 L3 19.4" fill="none" stroke="#9da0a3" stroke-width="2.6"/></svg>
<span class="t " style="left:229.70px;top:819.98px;font-size:26.6px;color:#bbbbbb;letter-spacing:0.849px;">monitor</span>
<svg style="left:194px;top:860px;" width="28" height="22" viewBox="0 0 28 22"><path d="M0 0 H10.6 L14 4.4 H28 V22 H0 Z" fill="#7f8b91"/></svg>
<svg style="left:159.5px;top:861px;" width="14" height="22" viewBox="0 0 14 22"><path d="M3 2.6 L10.6 11 L3 19.4" fill="none" stroke="#9da0a3" stroke-width="2.6"/></svg>
<span class="t " style="left:229.70px;top:859.98px;font-size:26.6px;color:#bbbbbb;letter-spacing:0.459px;">monitor_panel</span>
<svg style="left:194px;top:900px;" width="28" height="22" viewBox="0 0 28 22"><path d="M0 0 H10.6 L14 4.4 H28 V22 H0 Z" fill="#7f8b91"/></svg>
<svg style="left:159.5px;top:901px;" width="14" height="22" viewBox="0 0 14 22"><path d="M3 2.6 L10.6 11 L3 19.4" fill="none" stroke="#9da0a3" stroke-width="2.6"/></svg>
<span class="t " style="left:229.70px;top:899.98px;font-size:26.6px;color:#bbbbbb;letter-spacing:0.942px;">network</span>
<svg style="left:194px;top:940px;" width="28" height="22" viewBox="0 0 28 22"><path d="M0 0 H10.6 L14 4.4 H28 V22 H0 Z" fill="#7f8b91"/></svg>
<svg style="left:159.5px;top:941px;" width="14" height="22" viewBox="0 0 14 22"><path d="M3 2.6 L10.6 11 L3 19.4" fill="none" stroke="#9da0a3" stroke-width="2.6"/></svg>
<span class="t " style="left:229.70px;top:939.98px;font-size:26.6px;color:#bbbbbb;letter-spacing:0.706px;">node</span>
<svg style="left:194px;top:980px;" width="28" height="22" viewBox="0 0 28 22"><path d="M0 0 H10.6 L14 4.4 H28 V22 H0 Z" fill="#7f8b91"/></svg>
<svg style="left:159.5px;top:981px;" width="14" height="22" viewBox="0 0 14 22"><path d="M3 2.6 L10.6 11 L3 19.4" fill="none" stroke="#9da0a3" stroke-width="2.6"/></svg>
<span class="t " style="left:229.70px;top:979.98px;font-size:26.6px;color:#bbbbbb;letter-spacing:0.569px;">pagination</span>
<svg style="left:194px;top:1020px;" width="28" height="22" viewBox="0 0 28 22"><path d="M0 0 H10.6 L14 4.4 H28 V22 H0 Z" fill="#7f8b91"/></svg>
<svg style="left:159.5px;top:1021px;" width="14" height="22" viewBox="0 0 14 22"><path d="M3 2.6 L10.6 11 L3 19.4" fill="none" stroke="#9da0a3" stroke-width="2.6"/></svg>
<span class="t " style="left:229.70px;top:1019.98px;font-size:26.6px;color:#bbbbbb;letter-spacing:0.339px;">params</span>
<svg style="left:194px;top:1060px;" width="28" height="22" viewBox="0 0 28 22"><path d="M0 0 H10.6 L14 4.4 H28 V22 H0 Z" fill="#7f8b91"/></svg>
<svg style="left:159.5px;top:1061px;" width="14" height="22" viewBox="0 0 14 22"><path d="M3 2.6 L10.6 11 L3 19.4" fill="none" stroke="#9da0a3" stroke-width="2.6"/></svg>
<span class="t " style="left:229.70px;top:1059.98px;font-size:26.6px;color:#bbbbbb;letter-spacing:0.900px;">pod</span>
<svg style="left:194px;top:1100px;" width="28" height="22" viewBox="0 0 28 22"><path d="M0 0 H10.6 L14 4.4 H28 V22 H0 Z" fill="#7f8b91"/></svg>
<svg style="left:159.5px;top:1101px;" width="14" height="22" viewBox="0 0 14 22"><path d="M3 2.6 L10.6 11 L3 19.4" fill="none" stroke="#9da0a3" stroke-width="2.6"/></svg>
<span class="t " style="left:229.70px;top:1099.98px;font-size:26.6px;color:#bbbbbb;letter-spacing:1.095px;">product</span>
<svg style="left:194px;top:1140px;" width="28" height="22" viewBox="0 0 28 22"><path d="M0 0 H10.6 L14 4.4 H28 V22 H0 Z" fill="#7f8b91"/></svg>
<svg style="left:159.5px;top:1141px;" width="14" height="22" viewBox="0 0 14 22"><path d="M3 2.6 L10.6 11 L3 19.4" fill="none" stroke="#9da0a3" stroke-width="2.6"/></svg>
<span class="t " style="left:229.70px;top:1139.98px;font-size:26.6px;color:#bbbbbb;letter-spacing:0.612px;">proxy</span>
<svg style="left:194px;top:1180px;" width="28" height="22" viewBox="0 0 28 22"><path d="M0 0 H10.6 L14 4.4 H28 V22 H0 Z" fill="#7f8b91"/></svg>
<svg style="left:159.5px;top:1181px;" width="14" height="22" viewBox="0 0 14 22"><path d="M3 2.6 L10.6 11 L3 19.4" fill="none" stroke="#9da0a3" stroke-width="2.6"/></svg>
<span class="t " style="left:229.70px;top:1179.98px;font-size:26.6px;color:#bbbbbb;letter-spacing:0.760px;">sell</span>
<svg style="left:194px;top:1220px;" width="28" height="22" viewBox="0 0 28 22"><path d="M0 0 H10.6 L14 4.4 H28 V22 H0 Z" fill="#7f8b91"/></svg>
<svg style="left:159.5px;top:1221px;" width="14" height="22" viewBox="0 0 14 22"><path d="M3 2.6 L10.6 11 L3 19.4" fill="none" stroke="#9da0a3" stroke-width="2.6"/></svg>
<span class="t " style="left:229.70px;top:1219.98px;font-size:26.6px;color:#bbbbbb;letter-spacing:0.900px;">task</span>
<svg style="left:158px;top:1260px;" width="28" height="22" viewBox="0 0 28 22"><path d="M0 0 H10.6 L14 4.4 H28 V22 H0 Z" fill="#7f8b91"/></svg>
<svg style="left:123.5px;top:1261px;" width="14" height="22" viewBox="0 0 14 22"><path d="M3 2.6 L10.6 11 L3 19.4" fill="none" stroke="#9da0a3" stroke-width="2.6"/></svg>
<span class="t " style="left:193.70px;top:1259.98px;font-size:26.6px;color:#bbbbbb;letter-spacing:0.580px;">apisdk</span>
<svg style="left:158px;top:1300px;" width="28" height="22" viewBox="0 0 28 22"><path d="M0 0 H10.6 L14 4.4 H28 V22 H0 Z" fill="#7f8b91"/></svg>
<svg style="left:123.5px;top:1301px;" width="14" height="22" viewBox="0 0 14 22"><path d="M3 2.6 L10.6 11 L3 19.4" fill="none" stroke="#9da0a3" stroke-width="2.6"/></svg>
<span class="t " style="left:193.70px;top:1299.98px;font-size:26.6px;color:#bbbbbb;letter-spacing:0.835px;">hack</span>
<svg style="left:158px;top:1340px;" width="28" height="22" viewBox="0 0 28 22"><path d="M0 0 H10.6 L14 4.4 H28 V22 H0 Z" fill="#7f8b91"/></svg>
<svg style="left:120px;top:1344px;" width="22" height="14" viewBox="0 0 22 14"><path d="M2.6 3 L11 10.6 L19.4 3" fill="none" stroke="#9da0a3" stroke-width="2.6"/></svg>
<span class="t " style="left:193.70px;top:1339.98px;font-size:26.6px;color:#bbbbbb;letter-spacing:0.578px;">internal</span>
<svg style="left:194px;top:1380px;" width="28" height="22" viewBox="0 0 28 22"><path d="M0 0 H10.6 L14 4.4 H28 V22 H0 Z" fill="#7f8b91"/></svg>
<svg style="left:159.5px;top:1381px;" width="14" height="22" viewBox="0 0 14 22"><path d="M3 2.6 L10.6 11 L3 19.4" fill="none" stroke="#9da0a3" stroke-width="2.6"/></svg>
<span class="t " style="left:229.70px;top:1379.98px;font-size:26.6px;color:#bbbbbb;letter-spacing:0.900px;">boot</span>
<svg style="left:194px;top:1420px;" width="28" height="22" viewBox="0 0 28 22"><path d="M0 0 H10.6 L14 4.4 H28 V22 H0 Z" fill="#7f8b91"/></svg>
<svg style="left:159.5px;top:1421px;" width="14" height="22" viewBox="0 0 14 22"><path d="M3 2.6 L10.6 11 L3 19.4" fill="none" stroke="#9da0a3" stroke-width="2.6"/></svg>
<span class="t " style="left:229.70px;top:1419.98px;font-size:26.6px;color:#bbbbbb;letter-spacing:0.900px;">cmd</span>
<svg style="left:194px;top:1460px;" width="28" height="22" viewBox="0 0 28 22"><path d="M0 0 H10.6 L14 4.4 H28 V22 H0 Z" fill="#7f8b91"/></svg>
<svg style="left:159.5px;top:1461px;" width="14" height="22" viewBox="0 0 14 22"><path d="M3 2.6 L10.6 11 L3 19.4" fill="none" stroke="#9da0a3" stroke-width="2.6"/></svg>
<span class="t " style="left:229.70px;top:1459.98px;font-size:26.6px;color:#bbbbbb;letter-spacing:0.863px;">consts</span>
<svg style="left:194px;top:1500px;" width="28" height="22" viewBox="0 0 28 22"><path d="M0 0 H10.6 L14 4.4 H28 V22 H0 Z" fill="#7f8b91"/></svg>
<svg style="left:156px;top:1504px;" width="22" height="14" viewBox="0 0 22 14"><path d="M2.6 3 L11 10.6 L19.4 3" fill="none" stroke="#9da0a3" stroke-width="2.6"/></svg>
<span class="t " style="left:229.70px;top:1499.98px;font-size:26.6px;color:#bbbbbb;letter-spacing:0.821px;">controller</span>
<svg style="left:230px;top:1540px;" width="28" height="22" viewBox="0 0 28 22"><path d="M0 0 H10.6 L14 4.4 H28 V22 H0 Z" fill="#7f8b91"/></svg>
<svg style="left:195.5px;top:1541px;" width="14" height="22" viewBox="0 0 14 22"><path d="M3 2.6 L10.6 11 L3 19.4" fill="none" stroke="#9da0a3" stroke-width="2.6"/></svg>
<span class="t " style="left:265.70px;top:1539.98px;font-size:26.6px;color:#bbbbbb;letter-spacing:0.821px;">account</span>
<svg style="left:230px;top:1580px;" width="28" height="22" viewBox="0 0 28 22"><path d="M0 0 H10.6 L14 4.4 H28 V22 H0 Z" fill="#7f8b91"/></svg>
<svg style="left:192px;top:1584px;" width="22" height="14" viewBox="0 0 22 14"><path d="M2.6 3 L11 10.6 L19.4 3" fill="none" stroke="#9da0a3" stroke-width="2.6"/></svg>
<span class="t " style="left:265.70px;top:1579.98px;font-size:26.6px;color:#bbbbbb;letter-spacing:0.474px;">instance</span>
<svg style="left:269.2px;top:1617.8px;" width="20.6" height="28.4" viewBox="0 0 20.6 28.4"><circle cx="2.6" cy="4.4" r="2" fill="#6db5e1"/><circle cx="18" cy="4.4" r="2" fill="#6db5e1"/><path d="M1.9 9.6 C1.9 3.4 5.6 0 10.3 0 C15 0 18.7 3.4 18.7 9.6 C18.7 12.5 18.3 14 18.5 16.5 C19 19.5 19 20.5 18.8 22 C18.4 26 14.6 28.4 10.3 28.4 C6 28.4 2.2 26 1.8 22 C1.6 20.5 1.6 19.5 2.1 16.5 C2.3 14 1.9 12.5 1.9 9.6 Z" fill="#6db5e1"/><circle cx="1.2" cy="14.8" r="1.25" fill="#c79f80"/><circle cx="19.4" cy="14.8" r="1.25" fill="#c79f80"/><circle cx="3.4" cy="26.9" r="1.35" fill="#c79f80"/><circle cx="17.2" cy="26.9" r="1.35" fill="#c79f80"/><circle cx="6.6" cy="8.3" r="2.95" fill="#ffffff"/><circle cx="13.7" cy="8.3" r="2.8" fill="#ffffff"/><circle cx="7" cy="8.3" r="1.4" fill="#000000"/><circle cx="13.7" cy="8.3" r="1.4" fill="#000000"/><ellipse cx="10.2" cy="12.2" rx="1.7" ry="1.1" fill="#c79f80"/><rect x="9.3" y="12.7" width="1.8" height="1.8" fill="#ffffff"/><circle cx="10.2" cy="11.3" r="0.95" fill="#000000"/></svg>
<span class="t " style="left:301.70px;top:1619.98px;font-size:26.6px;color:#bbbbbb;letter-spacing:0.474px;">instance.go</span>
<div style="left:0px;top:1652px;width:944px;height:40px;background:#373d44;"></div>
<svg style="left:269.2px;top:1657.8px;" width="20.6" height="28.4" viewBox="0 0 20.6 28.4"><circle cx="2.6" cy="4.4" r="2" fill="#6db5e1"/><circle cx="18" cy="4.4" r="2" fill="#6db5e1"/><path d="M1.9 9.6 C1.9 3.4 5.6 0 10.3 0 C15 0 18.7 3.4 18.7 9.6 C18.7 12.5 18.3 14 18.5 16.5 C19 19.5 19 20.5 18.8 22 C18.4 26 14.6 28.4 10.3 28.4 C6 28.4 2.2 26 1.8 22 C1.6 20.5 1.6 19.5 2.1 16.5 C2.3 14 1.9 12.5 1.9 9.6 Z" fill="#6db5e1"/><circle cx="1.2" cy="14.8" r="1.25" fill="#c79f80"/><circle cx="19.4" cy="14.8" r="1.25" fill="#c79f80"/><circle cx="3.4" cy="26.9" r="1.35" fill="#c79f80"/><circle cx="17.2" cy="26.9" r="1.35" fill="#c79f80"/><circle cx="6.6" cy="8.3" r="2.95" fill="#ffffff"/><circle cx="13.7" cy="8.3" r="2.8" fill="#ffffff"/><circle cx="7" cy="8.3" r="1.4" fill="#000000"/><circle cx="13.7" cy="8.3" r="1.4" fill="#000000"/><ellipse cx="10.2" cy="12.2" rx="1.7" ry="1.1" fill="#c79f80"/><rect x="9.3" y="12.7" width="1.8" height="1.8" fill="#ffffff"/><circle cx="10.2" cy="11.3" r="0.95" fill="#000000"/></svg>
<span class="t " style="left:301.70px;top:1659.98px;font-size:26.6px;color:#bbbbbb;letter-spacing:0.322px;">instance_new.go</span>
<svg style="left:269.2px;top:1697.8px;" width="20.6" height="28.4" viewBox="0 0 20.6 28.4"><circle cx="2.6" cy="4.4" r="2" fill="#6db5e1"/><circle cx="18" cy="4.4" r="2" fill="#6db5e1"/><path d="M1.9 9.6 C1.9 3.4 5.6 0 10.3 0 C15 0 18.7 3.4 18.7 9.6 C18.7 12.5 18.3 14 18.5 16.5 C19 19.5 19 20.5 18.8 22 C18.4 26 14.6 28.4 10.3 28.4 C6 28.4 2.2 26 1.8 22 C1.6 20.5 1.6 19.5 2.1 16.5 C2.3 14 1.9 12.5 1.9 9.6 Z" fill="#6db5e1"/><circle cx="1.2" cy="14.8" r="1.25" fill="#c79f80"/><circle cx="19.4" cy="14.8" r="1.25" fill="#c79f80"/><circle cx="3.4" cy="26.9" r="1.35" fill="#c79f80"/><circle cx="17.2" cy="26.9" r="1.35" fill="#c79f80"/><circle cx="6.6" cy="8.3" r="2.95" fill="#ffffff"/><circle cx="13.7" cy="8.3" r="2.8" fill="#ffffff"/><circle cx="7" cy="8.3" r="1.4" fill="#000000"/><circle cx="13.7" cy="8.3" r="1.4" fill="#000000"/><ellipse cx="10.2" cy="12.2" rx="1.7" ry="1.1" fill="#c79f80"/><rect x="9.3" y="12.7" width="1.8" height="1.8" fill="#ffffff"/><circle cx="10.2" cy="11.3" r="0.95" fill="#000000"/></svg>
<span class="t " style="left:301.70px;top:1699.98px;font-size:26.6px;color:#bbbbbb;letter-spacing:0.259px;">instance_v1_check_create.go</span>
<svg style="left:269.2px;top:1737.8px;" width="20.6" height="28.4" viewBox="0 0 20.6 28.4"><circle cx="2.6" cy="4.4" r="2" fill="#6db5e1"/><circle cx="18" cy="4.4" r="2" fill="#6db5e1"/><path d="M1.9 9.6 C1.9 3.4 5.6 0 10.3 0 C15 0 18.7 3.4 18.7 9.6 C18.7 12.5 18.3 14 18.5 16.5 C19 19.5 19 20.5 18.8 22 C18.4 26 14.6 28.4 10.3 28.4 C6 28.4 2.2 26 1.8 22 C1.6 20.5 1.6 19.5 2.1 16.5 C2.3 14 1.9 12.5 1.9 9.6 Z" fill="#6db5e1"/><circle cx="1.2" cy="14.8" r="1.25" fill="#c79f80"/><circle cx="19.4" cy="14.8" r="1.25" fill="#c79f80"/><circle cx="3.4" cy="26.9" r="1.35" fill="#c79f80"/><circle cx="17.2" cy="26.9" r="1.35" fill="#c79f80"/><circle cx="6.6" cy="8.3" r="2.95" fill="#ffffff"/><circle cx="13.7" cy="8.3" r="2.8" fill="#ffffff"/><circle cx="7" cy="8.3" r="1.4" fill="#000000"/><circle cx="13.7" cy="8.3" r="1.4" fill="#000000"/><ellipse cx="10.2" cy="12.2" rx="1.7" ry="1.1" fill="#c79f80"/><rect x="9.3" y="12.7" width="1.8" height="1.8" fill="#ffffff"/><circle cx="10.2" cy="11.3" r="0.95" fill="#000000"/></svg>
<span class="t " style="left:301.70px;top:1739.98px;font-size:26.6px;color:#bbbbbb;letter-spacing:0.223px;">instance_v1_create_instance.go</span>
<svg style="left:269.2px;top:1777.8px;" width="20.6" height="28.4" viewBox="0 0 20.6 28.4"><circle cx="2.6" cy="4.4" r="2" fill="#6db5e1"/><circle cx="18" cy="4.4" r="2" fill="#6db5e1"/><path d="M1.9 9.6 C1.9 3.4 5.6 0 10.3 0 C15 0 18.7 3.4 18.7 9.6 C18.7 12.5 18.3 14 18.5 16.5 C19 19.5 19 20.5 18.8 22 C18.4 26 14.6 28.4 10.3 28.4 C6 28.4 2.2 26 1.8 22 C1.6 20.5 1.6 19.5 2.1 16.5 C2.3 14 1.9 12.5 1.9 9.6 Z" fill="#6db5e1"/><circle cx="1.2" cy="14.8" r="1.25" fill="#c79f80"/><circle cx="19.4" cy="14.8" r="1.25" fill="#c79f80"/><circle cx="3.4" cy="26.9" r="1.35" fill="#c79f80"/><circle cx="17.2" cy="26.9" r="1.35" fill="#c79f80"/><circle cx="6.6" cy="8.3" r="2.95" fill="#ffffff"/><circle cx="13.7" cy="8.3" r="2.8" fill="#ffffff"/><circle cx="7" cy="8.3" r="1.4" fill="#000000"/><circle cx="13.7" cy="8.3" r="1.4" fill="#000000"/><ellipse cx="10.2" cy="12.2" rx="1.7" ry="1.1" fill="#c79f80"/><rect x="9.3" y="12.7" width="1.8" height="1.8" fill="#ffffff"/><circle cx="10.2" cy="11.3" r="0.95" fill="#000000"/></svg>
<span class="t " style="left:301.70px;top:1779.98px;font-size:26.6px;color:#bbbbbb;letter-spacing:0.235px;">instance_v1_create_instances.go</span>
<svg style="left:269.2px;top:1817.8px;" width="20.6" height="28.4" viewBox="0 0 20.6 28.4"><circle cx="2.6" cy="4.4" r="2" fill="#6db5e1"/><circle cx="18" cy="4.4" r="2" fill="#6db5e1"/><path d="M1.9 9.6 C1.9 3.4 5.6 0 10.3 0 C15 0 18.7 3.4 18.7 9.6 C18.7 12.5 18.3 14 18.5 16.5 C19 19.5 19 20.5 18.8 22 C18.4 26 14.6 28.4 10.3 28.4 C6 28.4 2.2 26 1.8 22 C1.6 20.5 1.6 19.5 2.1 16.5 C2.3 14 1.9 12.5 1.9 9.6 Z" fill="#6db5e1"/><circle cx="1.2" cy="14.8" r="1.25" fill="#c79f80"/><circle cx="19.4" cy="14.8" r="1.25" fill="#c79f80"/><circle cx="3.4" cy="26.9" r="1.35" fill="#c79f80"/><circle cx="17.2" cy="26.9" r="1.35" fill="#c79f80"/><circle cx="6.6" cy="8.3" r="2.95" fill="#ffffff"/><circle cx="13.7" cy="8.3" r="2.8" fill="#ffffff"/><circle cx="7" cy="8.3" r="1.4" fill="#000000"/><circle cx="13.7" cy="8.3" r="1.4" fill="#000000"/><ellipse cx="10.2" cy="12.2" rx="1.7" ry="1.1" fill="#c79f80"/><rect x="9.3" y="12.7" width="1.8" height="1.8" fill="#ffffff"/><circle cx="10.2" cy="11.3" r="0.95" fill="#000000"/></svg>
<span class="t " style="left:301.70px;top:1819.98px;font-size:26.6px;color:#bbbbbb;letter-spacing:0.279px;">instance_v1_describe_instance.go</span>
</div>
<div style="left:986px;top:170px;width:28px;height:1856px;background:#363a3b;"></div>
<div style="left:992px;top:279.5px;width:16.4px;height:616px;border-radius:8.2px;background:#4b4c4e;box-shadow:0 0 0 1px #303335"></div>
<div style="left:1014px;top:116px;width:2px;height:1911px;background:#2c2d2f;"></div>
<div style="left:1016px;top:116px;width:224px;height:48px;background:#44484b;"></div>
<div style="left:1016px;top:164px;width:224px;height:6px;background:#6a707a;"></div>
<div style="left:1240px;top:168px;width:2558px;height:2px;background:#303133;"></div>
<svg style="left:1037.7px;top:127.7px;" width="20.6" height="28.4" viewBox="0 0 20.6 28.4"><circle cx="2.6" cy="4.4" r="2" fill="#6db5e1"/><circle cx="18" cy="4.4" r="2" fill="#6db5e1"/><path d="M1.9 9.6 C1.9 3.4 5.6 0 10.3 0 C15 0 18.7 3.4 18.7 9.6 C18.7 12.5 18.3 14 18.5 16.5 C19 19.5 19 20.5 18.8 22 C18.4 26 14.6 28.4 10.3 28.4 C6 28.4 2.2 26 1.8 22 C1.6 20.5 1.6 19.5 2.1 16.5 C2.3 14 1.9 12.5 1.9 9.6 Z" fill="#6db5e1"/><circle cx="1.2" cy="14.8" r="1.25" fill="#c79f80"/><circle cx="19.4" cy="14.8" r="1.25" fill="#c79f80"/><circle cx="3.4" cy="26.9" r="1.35" fill="#c79f80"/><circle cx="17.2" cy="26.9" r="1.35" fill="#c79f80"/><circle cx="6.6" cy="8.3" r="2.95" fill="#ffffff"/><circle cx="13.7" cy="8.3" r="2.8" fill="#ffffff"/><circle cx="7" cy="8.3" r="1.4" fill="#000000"/><circle cx="13.7" cy="8.3" r="1.4" fill="#000000"/><ellipse cx="10.2" cy="12.2" rx="1.7" ry="1.1" fill="#c79f80"/><rect x="9.3" y="12.7" width="1.8" height="1.8" fill="#ffffff"/><circle cx="10.2" cy="11.3" r="0.95" fill="#000000"/></svg>
<span class="t " style="left:1071.91px;top:131.38px;font-size:22.0px;color:#bbbbbb;letter-spacing:0.935px;">instance.go</span>
<svg style="left:1207px;top:133px;" width="18" height="18" viewBox="0 0 18 18"><path d="M2 2 L16 16 M16 2 L2 16" stroke="#62676b" stroke-width="2" fill="none"/></svg>
<div style="left:3771px;top:130.4px;width:5.2px;height:5.2px;border-radius:50%;background:#9da0a3"></div>
<div style="left:3771px;top:139.20000000000002px;width:5.2px;height:5.2px;border-radius:50%;background:#9da0a3"></div>
<div style="left:3771px;top:148.0px;width:5.2px;height:5.2px;border-radius:50%;background:#9da0a3"></div>
<div id="editor" style="left:1016px;top:170px;width:2782px;height:1812px">
<div style="left:0px;top:0px;width:130px;height:1812px;background:#2c2d2f;"></div>
<div style="left:131px;top:1040px;width:2651px;height:52px;background:#2e2e2e;"></div>
<div style="left:129.4px;top:0px;width:1.8px;height:1812px;background:#505254;"></div>
<div style="left:2304px;top:0px;width:1.5px;height:1812px;background:#3b3b3b;"></div>
<div class="ln" style="top:2.5px;color:#585b5f">1</div>
<pre class="cl" style="left:144px;top:1.7px"><span style="color:#7b7b7b">// </span><span class="eq" style="color:#7b7b7b">=================================================================================</span></pre>
<div class="ln" style="top:54.5px;color:#585b5f">2</div>
<pre class="cl" style="left:144px;top:53.7px"><span style="color:#7b7b7b">// Code generated and maintained by GoFrame CLI tool. DO NOT EDIT.</span></pre>
<div class="ln" style="top:106.5px;color:#585b5f">3</div>
<pre class="cl" style="left:144px;top:105.7px"><span style="color:#7b7b7b">// </span><span class="eq" style="color:#7b7b7b">=================================================================================</span></pre>
<div class="ln" style="top:158.5px;color:#585b5f">4</div>
<div class="ln" style="top:210.5px;color:#585b5f">5</div>
<pre class="cl" style="left:144px;top:209.7px"><span style="color:#cc7832">package</span> <span style="color:#afbf7e">instance</span></pre>
<div class="ln" style="top:262.5px;color:#585b5f">6</div>
<div class="ln" style="top:314.5px;color:#585b5f">7</div>
<pre class="cl" style="left:144px;top:313.7px"><span style="color:#cc7832">import</span> (</pre>
<div class="ln" style="top:366.5px;color:#585b5f">8</div>
<div style="left:234px;top:364px;width:126px;height:52px;background:#2f3d2f;"></div>
<pre class="cl" style="left:144px;top:365.7px">    <span style="color:#6a8759">&quot;</span><span style="color:#6a8759">context</span><span style="color:#6a8759">&quot;</span></pre>
<div class="ln" style="top:418.5px;color:#585b5f">9</div>
<div class="ln" style="top:470.5px;color:#585b5f">10</div>
<pre class="cl" style="left:144px;top:469.7px">    <span style="color:#6a8759">&quot;git.woa.com/khaos/eros/app/khaos-shark/api/instance/v1&quot;</span></pre>
<div class="ln" style="top:522.5px;color:#585b5f">11</div>
<pre class="cl" style="left:144px;top:521.7px">    <span style="color:#6a8759">&quot;git.woa.com/khaos/eros/app/khaos-shark/api/instance/v2&quot;</span></pre>
<div class="ln" style="top:574.5px;color:#585b5f">12</div>
<pre class="cl" style="left:144px;top:573.7px">)</pre>
<div class="ln" style="top:626.5px;color:#585b5f">13</div>
<div class="ln" style="top:678.5px;color:#585b5f">14</div>
<pre class="cl" style="left:144px;top:677.7px"><span style="color:#cc7832">type</span> IInstanceV1 <span style="color:#cc7832">interface</span> {</pre>
<div class="ln" style="top:730.5px;color:#585b5f">15</div>
<div style="left:504px;top:728px;width:126px;height:52px;background:#2f3d2f;"></div>
<pre class="cl" style="left:144px;top:729.7px">    <span style="color:#ffc66d">CheckCreate</span>(ctx <span style="color:#afbf7e">context</span>.<span style="color:#6fafbd">Context</span><span style="color:#cc7832">,</span> req <span class="as">*</span><span style="color:#afbf7e">v1</span>.<span style="color:#6fafbd">CheckCreateReq</span>) (res <span class="as">*</span><span style="color:#afbf7e">v1</span>.<span style="color:#6fafbd">CheckCreateRes</span><span style="color:#cc7832">,</span> err <span style="color:#cc7832">error</span>)</pre>
<div class="ln" style="top:782.5px;color:#585b5f">16</div>
<div style="left:558px;top:780px;width:126px;height:52px;background:#2f3d2f;"></div>
<pre class="cl" style="left:144px;top:781.7px">    <span style="color:#ffc66d">CreateInstance</span>(ctx <span style="color:#afbf7e">context</span>.<span style="color:#6fafbd">Context</span><span style="color:#cc7832">,</span> req <span class="as">*</span><span style="color:#afbf7e">v1</span>.<span style="color:#6fafbd">CreateInstanceReq</span>) (res <span class="as">*</span><span style="color:#afbf7e">v1</span>.<span style="color:#6fafbd">CreateInstanceRes</span><span style="color:#cc7832">,</span> err <span style="color:#cc7832">error</span>)</pre>
<div class="ln" style="top:834.5px;color:#585b5f">17</div>
<div style="left:576px;top:832px;width:126px;height:52px;background:#2f3d2f;"></div>
<pre class="cl" style="left:144px;top:833.7px">    <span style="color:#ffc66d">CreateInstances</span>(ctx <span style="color:#afbf7e">context</span>.<span style="color:#6fafbd">Context</span><span style="color:#cc7832">,</span> req <span class="as">*</span><span style="color:#afbf7e">v1</span>.<span style="color:#6fafbd">CreateInstancesReq</span>) (res <span class="as">*</span><span style="color:#afbf7e">v1</span>.<span style="color:#6fafbd">CreateInstancesRes</span><span style="color:#cc7832">,</span> err <span style="color:#cc7832">error</span>)</pre>
<div class="ln" style="top:886.5px;color:#585b5f">18</div>
<div style="left:594px;top:884px;width:126px;height:52px;background:#2f3d2f;"></div>
<pre class="cl" style="left:144px;top:885.7px">    <span style="color:#ffc66d">DescribeInstance</span>(ctx <span style="color:#afbf7e">context</span>.<span style="color:#6fafbd">Context</span><span style="color:#cc7832">,</span> req <span class="as">*</span><span style="color:#afbf7e">v1</span>.<span style="color:#6fafbd">DescribeInstanceReq</span>) (res <span class="as">*</span><span style="color:#afbf7e">v1</span>.<span style="color:#6fafbd">DescribeInstanceRes</span><span style="color:#cc7832">,</span> err <span style="color:#cc7832">error</span>)</pre>
<div class="ln" style="top:938.5px;color:#585b5f">19</div>
<div style="left:702px;top:936px;width:126px;height:52px;background:#2f3d2f;"></div>
<pre class="cl" style="left:144px;top:937.7px">    <span style="color:#ffc66d">DescribeCreateProgress</span>(ctx <span style="color:#afbf7e">context</span>.<span style="color:#6fafbd">Context</span><span style="color:#cc7832">,</span> req <span class="as">*</span><span style="color:#afbf7e">v1</span>.<span style="color:#6fafbd">DescribeCreateProgressReq</span>) (res <span class="as">*</span><span style="color:#afbf7e">v1</span>.<span style="color:#6fafbd">DescribeCreateProgressRes</span><span style="color:#cc7832">,</span> err <span style="color:#cc7832">error</span>)</pre>
<div class="ln" style="top:990.5px;color:#585b5f">20</div>
<div style="left:702px;top:988px;width:126px;height:52px;background:#2f3d2f;"></div>
<pre class="cl" style="left:144px;top:989.7px">    <span style="color:#ffc66d">DescribeInstanceHealth</span>(ctx <span style="color:#afbf7e">context</span>.<span style="color:#6fafbd">Context</span><span style="color:#cc7832">,</span> req <span class="as">*</span><span style="color:#afbf7e">v1</span>.<span style="color:#6fafbd">DescribeInstanceHealthReq</span>) (res <span class="as">*</span><span style="color:#afbf7e">v1</span>.<span style="color:#6fafbd">DescribeInstanceHealthRes</span><span style="color:#cc7832">,</span> err <span style="color:#cc7832">error</span>)</pre>
<div class="ln" style="top:1042.5px;color:#a4a3a3">21</div>
<div style="left:666px;top:1040px;width:126px;height:52px;background:#2f3d2f;"></div>
<pre class="cl" style="left:144px;top:1041.7px">    <span style="color:#ffc66d">DescribeInstancePods</span>(ctx <span style="color:#afbf7e">context</span>.<span style="color:#6fafbd">Context</span><span style="color:#cc7832">,</span> req <span class="as">*</span><span style="color:#afbf7e">v1</span>.<span style="color:#6fafbd">DescribeInstancePodsReq</span>) (res <span class="as">*</span><span style="color:#afbf7e">v1</span>.<span style="color:#6fafbd">DescribeInstancePodsRes</span><span style="color:#cc7832">,</span> err <span style="color:#cc7832">error</span>)</pre>
<div class="ln" style="top:1094.5px;color:#585b5f">22</div>
<div style="left:612px;top:1092px;width:126px;height:52px;background:#2f3d2f;"></div>
<pre class="cl" style="left:144px;top:1093.7px">    <span style="color:#ffc66d">DescribeInstances</span>(ctx <span style="color:#afbf7e">context</span>.<span style="color:#6fafbd">Context</span><span style="color:#cc7832">,</span> req <span class="as">*</span><span style="color:#afbf7e">v1</span>.<span style="color:#6fafbd">DescribeInstancesReq</span>) (res <span class="as">*</span><span style="color:#afbf7e">v1</span>.<span style="color:#6fafbd">DescribeInstancesRes</span><span style="color:#cc7832">,</span> err <span style="color:#cc7832">error</span>)</pre>
<div class="ln" style="top:1146.5px;color:#585b5f">23</div>
<div style="left:594px;top:1144px;width:126px;height:52px;background:#2f3d2f;"></div>
<pre class="cl" style="left:144px;top:1145.7px">    <span style="color:#ffc66d">IsolateInstances</span>(ctx <span style="color:#afbf7e">context</span>.<span style="color:#6fafbd">Context</span><span style="color:#cc7832">,</span> req <span class="as">*</span><span style="color:#afbf7e">v1</span>.<span style="color:#6fafbd">IsolateInstancesReq</span>) (res <span class="as">*</span><span style="color:#afbf7e">v1</span>.<span style="color:#6fafbd">IsolateInstancesRes</span><span style="color:#cc7832">,</span> err <span style="color:#cc7832">error</span>)</pre>
<div class="ln" style="top:1198.5px;color:#585b5f">24</div>
<div style="left:558px;top:1196px;width:126px;height:52px;background:#2f3d2f;"></div>
<pre class="cl" style="left:144px;top:1197.7px">    <span style="color:#ffc66d">ModifyInstance</span>(ctx <span style="color:#afbf7e">context</span>.<span style="color:#6fafbd">Context</span><span style="color:#cc7832">,</span> req <span class="as">*</span><span style="color:#afbf7e">v1</span>.<span style="color:#6fafbd">ModifyInstanceReq</span>) (res <span class="as">*</span><span style="color:#afbf7e">v1</span>.<span style="color:#6fafbd">ModifyInstanceRes</span><span style="color:#cc7832">,</span> err <span style="color:#cc7832">error</span>)</pre>
<div class="ln" style="top:1250.5px;color:#585b5f">25</div>
<div style="left:594px;top:1248px;width:126px;height:52px;background:#2f3d2f;"></div>
<pre class="cl" style="left:144px;top:1249.7px">    <span style="color:#ffc66d">OfflineInstances</span>(ctx <span style="color:#afbf7e">context</span>.<span style="color:#6fafbd">Context</span><span style="color:#cc7832">,</span> req <span class="as">*</span><span style="color:#afbf7e">v1</span>.<span style="color:#6fafbd">OfflineInstancesReq</span>) (res <span class="as">*</span><span style="color:#afbf7e">v1</span>.<span style="color:#6fafbd">OfflineInstancesRes</span><span style="color:#cc7832">,</span> err <span style="color:#cc7832">error</span>)</pre>
<div class="ln" style="top:1302.5px;color:#585b5f">26</div>
<div style="left:594px;top:1300px;width:126px;height:52px;background:#2f3d2f;"></div>
<pre class="cl" style="left:144px;top:1301.7px">    <span style="color:#ffc66d">RecoverInstances</span>(ctx <span style="color:#afbf7e">context</span>.<span style="color:#6fafbd">Context</span><span style="color:#cc7832">,</span> req <span class="as">*</span><span style="color:#afbf7e">v1</span>.<span style="color:#6fafbd">RecoverInstancesReq</span>) (res <span class="as">*</span><span style="color:#afbf7e">v1</span>.<span style="color:#6fafbd">RecoverInstancesRes</span><span style="color:#cc7832">,</span> err <span style="color:#cc7832">error</span>)</pre>
<div class="ln" style="top:1354.5px;color:#585b5f">27</div>
<pre class="cl" style="left:144px;top:1353.7px">}</pre>
<div class="ln" style="top:1406.5px;color:#585b5f">28</div>
<div class="ln" style="top:1458.5px;color:#585b5f">29</div>
<pre class="cl" style="left:144px;top:1457.7px"><span style="color:#cc7832">type</span> IInstanceV2 <span style="color:#cc7832">interface</span> {</pre>
<div class="ln" style="top:1510.5px;color:#585b5f">30</div>
<div style="left:504px;top:1508px;width:126px;height:52px;background:#2f3d2f;"></div>
<pre class="cl" style="left:144px;top:1509.7px">    <span style="color:#ffc66d">CheckCreate</span>(ctx <span style="color:#afbf7e">context</span>.<span style="color:#6fafbd">Context</span><span style="color:#cc7832">,</span> req <span class="as">*</span><span style="color:#afbf7e">v2</span>.<span style="color:#6fafbd">CheckCreateReq</span>) (res <span class="as">*</span><span style="color:#afbf7e">v2</span>.<span style="color:#6fafbd">CheckCreateRes</span><span style="color:#cc7832">,</span> err <span style="color:#cc7832">error</span>)</pre>
<div class="ln" style="top:1562.5px;color:#585b5f">31</div>
<div style="left:558px;top:1560px;width:126px;height:52px;background:#2f3d2f;"></div>
<pre class="cl" style="left:144px;top:1561.7px">    <span style="color:#ffc66d">CreateInstance</span>(ctx <span style="color:#afbf7e">context</span>.<span style="color:#6fafbd">Context</span><span style="color:#cc7832">,</span> req <span class="as">*</span><span style="color:#afbf7e">v2</span>.<span style="color:#6fafbd">CreateInstanceReq</span>) (res <span class="as">*</span><span style="color:#afbf7e">v2</span>.<span style="color:#6fafbd">CreateInstanceRes</span><span style="color:#cc7832">,</span> err <span style="color:#cc7832">error</span>)</pre>
<div class="ln" style="top:1614.5px;color:#585b5f">32</div>
<div style="left:576px;top:1612px;width:126px;height:52px;background:#2f3d2f;"></div>
<pre class="cl" style="left:144px;top:1613.7px">    <span style="color:#ffc66d">CreateInstances</span>(ctx <span style="color:#afbf7e">context</span>.<span style="color:#6fafbd">Context</span><span style="color:#cc7832">,</span> req <span class="as">*</span><span style="color:#afbf7e">v2</span>.<span style="color:#6fafbd">CreateInstancesReq</span>) (res <span class="as">*</span><span style="color:#afbf7e">v2</span>.<span style="color:#6fafbd">CreateInstancesRes</span><span style="color:#cc7832">,</span> err <span style="color:#cc7832">error</span>)</pre>
<div class="ln" style="top:1666.5px;color:#585b5f">33</div>
<div style="left:594px;top:1664px;width:126px;height:52px;background:#2f3d2f;"></div>
<pre class="cl" style="left:144px;top:1665.7px">    <span style="color:#ffc66d">DescribeInstance</span>(ctx <span style="color:#afbf7e">context</span>.<span style="color:#6fafbd">Context</span><span style="color:#cc7832">,</span> req <span class="as">*</span><span style="color:#afbf7e">v2</span>.<span style="color:#6fafbd">DescribeInstanceReq</span>) (res <span class="as">*</span><span style="color:#afbf7e">v2</span>.<span style="color:#6fafbd">DescribeInstanceRes</span><span style="color:#cc7832">,</span> err <span style="color:#cc7832">error</span>)</pre>
<div class="ln" style="top:1718.5px;color:#585b5f">34</div>
<div style="left:702px;top:1716px;width:126px;height:52px;background:#2f3d2f;"></div>
<pre class="cl" style="left:144px;top:1717.7px">    <span style="color:#ffc66d">DescribeCreateProgress</span>(ctx <span style="color:#afbf7e">context</span>.<span style="color:#6fafbd">Context</span><span style="color:#cc7832">,</span> req <span class="as">*</span><span style="color:#afbf7e">v2</span>.<span style="color:#6fafbd">DescribeCreateProgressReq</span>) (res <span class="as">*</span><span style="color:#afbf7e">v2</span>.<span style="color:#6fafbd">DescribeCreateProgressRes</span><span style="color:#cc7832">,</span> err <span style="color:#cc7832">error</span>)</pre>
<div class="ln" style="top:1770.5px;color:#585b5f">35</div>
<div style="left:702px;top:1768px;width:126px;height:52px;background:#2f3d2f;"></div>
<pre class="cl" style="left:144px;top:1769.7px">    <span style="color:#ffc66d">DescribeInstanceHealth</span>(ctx <span style="color:#afbf7e">context</span>.<span style="color:#6fafbd">Context</span><span style="color:#cc7832">,</span> req <span class="as">*</span><span style="color:#afbf7e">v2</span>.<span style="color:#6fafbd">DescribeInstanceHealthReq</span>) (res <span class="as">*</span><span style="color:#afbf7e">v2</span>.<span style="color:#6fafbd">DescribeInstanceHealthRes</span><span style="color:#cc7832">,</span> err <span style="color:#cc7832">error</span>)</pre>
<svg style="left:63px;top:678px;" width="36" height="48" viewBox="0 0 36 48"><circle cx="11.8" cy="22.2" r="10.9" fill="#4b883c"/><path d="M7.8 16.6 H15.8 V18.8 H13 V25.6 H15.8 V27.8 H7.8 V25.6 H10.6 V18.8 H7.8 Z" fill="#263a20"/><rect x="25" y="5.6" width="2.9" height="26" fill="#afb1b3"/><path d="M20 29.6 H33 L26.5 38.2 Z" fill="#afb1b3"/></svg>
<svg style="left:63px;top:730px;" width="36" height="48" viewBox="0 0 36 48"><circle cx="11.8" cy="22.2" r="10.9" fill="#4b883c"/><path d="M7.8 16.6 H15.8 V18.8 H13 V25.6 H15.8 V27.8 H7.8 V25.6 H10.6 V18.8 H7.8 Z" fill="#263a20"/><rect x="25" y="5.6" width="2.9" height="26" fill="#afb1b3"/><path d="M20 29.6 H33 L26.5 38.2 Z" fill="#afb1b3"/></svg>
<svg style="left:63px;top:782px;" width="36" height="48" viewBox="0 0 36 48"><circle cx="11.8" cy="22.2" r="10.9" fill="#4b883c"/><path d="M7.8 16.6 H15.8 V18.8 H13 V25.6 H15.8 V27.8 H7.8 V25.6 H10.6 V18.8 H7.8 Z" fill="#263a20"/><rect x="25" y="5.6" width="2.9" height="26" fill="#afb1b3"/><path d="M20 29.6 H33 L26.5 38.2 Z" fill="#afb1b3"/></svg>
<svg style="left:63px;top:834px;" width="36" height="48" viewBox="0 0 36 48"><circle cx="11.8" cy="22.2" r="10.9" fill="#4b883c"/><path d="M7.8 16.6 H15.8 V18.8 H13 V25.6 H15.8 V27.8 H7.8 V25.6 H10.6 V18.8 H7.8 Z" fill="#263a20"/><rect x="25" y="5.6" width="2.9" height="26" fill="#afb1b3"/><path d="M20 29.6 H33 L26.5 38.2 Z" fill="#afb1b3"/></svg>
<svg style="left:63px;top:886px;" width="36" height="48" viewBox="0 0 36 48"><circle cx="11.8" cy="22.2" r="10.9" fill="#4b883c"/><path d="M7.8 16.6 H15.8 V18.8 H13 V25.6 H15.8 V27.8 H7.8 V25.6 H10.6 V18.8 H7.8 Z" fill="#263a20"/><rect x="25" y="5.6" width="2.9" height="26" fill="#afb1b3"/><path d="M20 29.6 H33 L26.5 38.2 Z" fill="#afb1b3"/></svg>
<svg style="left:63px;top:1250px;" width="36" height="48" viewBox="0 0 36 48"><circle cx="11.8" cy="22.2" r="10.9" fill="#4b883c"/><path d="M7.8 16.6 H15.8 V18.8 H13 V25.6 H15.8 V27.8 H7.8 V25.6 H10.6 V18.8 H7.8 Z" fill="#263a20"/><rect x="25" y="5.6" width="2.9" height="26" fill="#afb1b3"/><path d="M20 29.6 H33 L26.5 38.2 Z" fill="#afb1b3"/></svg>
<svg style="left:63px;top:1302px;" width="36" height="48" viewBox="0 0 36 48"><circle cx="11.8" cy="22.2" r="10.9" fill="#4b883c"/><path d="M7.8 16.6 H15.8 V18.8 H13 V25.6 H15.8 V27.8 H7.8 V25.6 H10.6 V18.8 H7.8 Z" fill="#263a20"/><rect x="25" y="5.6" width="2.9" height="26" fill="#afb1b3"/><path d="M20 29.6 H33 L26.5 38.2 Z" fill="#afb1b3"/></svg>
<svg style="left:63px;top:1458px;" width="36" height="48" viewBox="0 0 36 48"><circle cx="11.8" cy="22.2" r="10.9" fill="#4b883c"/><path d="M7.8 16.6 H15.8 V18.8 H13 V25.6 H15.8 V27.8 H7.8 V25.6 H10.6 V18.8 H7.8 Z" fill="#263a20"/><rect x="25" y="5.6" width="2.9" height="26" fill="#afb1b3"/><path d="M20 29.6 H33 L26.5 38.2 Z" fill="#afb1b3"/></svg>
<svg style="left:63px;top:1510px;" width="36" height="48" viewBox="0 0 36 48"><circle cx="11.8" cy="22.2" r="10.9" fill="#4b883c"/><path d="M7.8 16.6 H15.8 V18.8 H13 V25.6 H15.8 V27.8 H7.8 V25.6 H10.6 V18.8 H7.8 Z" fill="#263a20"/><rect x="25" y="5.6" width="2.9" height="26" fill="#afb1b3"/><path d="M20 29.6 H33 L26.5 38.2 Z" fill="#afb1b3"/></svg>
<svg style="left:63px;top:1562px;" width="36" height="48" viewBox="0 0 36 48"><circle cx="11.8" cy="22.2" r="10.9" fill="#4b883c"/><path d="M7.8 16.6 H15.8 V18.8 H13 V25.6 H15.8 V27.8 H7.8 V25.6 H10.6 V18.8 H7.8 Z" fill="#263a20"/><rect x="25" y="5.6" width="2.9" height="26" fill="#afb1b3"/><path d="M20 29.6 H33 L26.5 38.2 Z" fill="#afb1b3"/></svg>
<svg style="left:63px;top:1614px;" width="36" height="48" viewBox="0 0 36 48"><circle cx="11.8" cy="22.2" r="10.9" fill="#4b883c"/><path d="M7.8 16.6 H15.8 V18.8 H13 V25.6 H15.8 V27.8 H7.8 V25.6 H10.6 V18.8 H7.8 Z" fill="#263a20"/><rect x="25" y="5.6" width="2.9" height="26" fill="#afb1b3"/><path d="M20 29.6 H33 L26.5 38.2 Z" fill="#afb1b3"/></svg>
<svg style="left:63px;top:1666px;" width="36" height="48" viewBox="0 0 36 48"><circle cx="11.8" cy="22.2" r="10.9" fill="#4b883c"/><path d="M7.8 16.6 H15.8 V18.8 H13 V25.6 H15.8 V27.8 H7.8 V25.6 H10.6 V18.8 H7.8 Z" fill="#263a20"/><rect x="25" y="5.6" width="2.9" height="26" fill="#afb1b3"/><path d="M20 29.6 H33 L26.5 38.2 Z" fill="#afb1b3"/></svg>
<svg style="left:63px;top:1718px;" width="36" height="48" viewBox="0 0 36 48"><circle cx="11.8" cy="22.2" r="10.9" fill="#4b883c"/><path d="M7.8 16.6 H15.8 V18.8 H13 V25.6 H15.8 V27.8 H7.8 V25.6 H10.6 V18.8 H7.8 Z" fill="#263a20"/><rect x="25" y="5.6" width="2.9" height="26" fill="#afb1b3"/><path d="M20 29.6 H33 L26.5 38.2 Z" fill="#afb1b3"/></svg>
<svg style="left:63px;top:1770px;" width="36" height="48" viewBox="0 0 36 48"><circle cx="11.8" cy="22.2" r="10.9" fill="#4b883c"/><path d="M7.8 16.6 H15.8 V18.8 H13 V25.6 H15.8 V27.8 H7.8 V25.6 H10.6 V18.8 H7.8 Z" fill="#263a20"/><rect x="25" y="5.6" width="2.9" height="26" fill="#afb1b3"/><path d="M20 29.6 H33 L26.5 38.2 Z" fill="#afb1b3"/></svg>
<svg style="left:119.09999999999991px;top:16px;" width="22" height="28" viewBox="0 0 22 28"><path d="M1 1 H21 V17.6 L11 27.4 L1 17.6 Z" fill="#262626" stroke="#525456" stroke-width="1.9"/><path d="M5.4 11.6 H16.6" stroke="#5c5f62" stroke-width="1.9"/></svg>
<svg style="left:119.09999999999991px;top:115px;" width="22" height="28" viewBox="0 0 22 28"><path d="M1 27.2 H21 V10.6 L11 1 L1 10.6 Z" fill="#262626" stroke="#525456" stroke-width="1.9"/><path d="M5.4 17.2 H16.6" stroke="#5c5f62" stroke-width="1.9"/></svg>
<svg style="left:119.09999999999991px;top:328px;" width="22" height="28" viewBox="0 0 22 28"><path d="M1 1 H21 V17.6 L11 27.4 L1 17.6 Z" fill="#262626" stroke="#525456" stroke-width="1.9"/><path d="M5.4 11.6 H16.6" stroke="#5c5f62" stroke-width="1.9"/></svg>
<svg style="left:119.09999999999991px;top:583px;" width="22" height="28" viewBox="0 0 22 28"><path d="M1 27.2 H21 V10.6 L11 1 L1 10.6 Z" fill="#262626" stroke="#525456" stroke-width="1.9"/><path d="M5.4 17.2 H16.6" stroke="#5c5f62" stroke-width="1.9"/></svg>
<svg style="left:119.09999999999991px;top:692px;" width="22" height="28" viewBox="0 0 22 28"><path d="M1 1 H21 V17.6 L11 27.4 L1 17.6 Z" fill="#262626" stroke="#525456" stroke-width="1.9"/><path d="M5.4 11.6 H16.6" stroke="#5c5f62" stroke-width="1.9"/></svg>
<svg style="left:119.09999999999991px;top:1363px;" width="22" height="28" viewBox="0 0 22 28"><path d="M1 27.2 H21 V10.6 L11 1 L1 10.6 Z" fill="#262626" stroke="#525456" stroke-width="1.9"/><path d="M5.4 17.2 H16.6" stroke="#5c5f62" stroke-width="1.9"/></svg>
<svg style="left:119.09999999999991px;top:1472px;" width="22" height="28" viewBox="0 0 22 28"><path d="M1 1 H21 V17.6 L11 27.4 L1 17.6 Z" fill="#262626" stroke="#525456" stroke-width="1.9"/><path d="M5.4 11.6 H16.6" stroke="#5c5f62" stroke-width="1.9"/></svg>
<svg style="left:161px;top:1045.6px;" width="22" height="30" viewBox="0 0 22 30"><path d="M11 0.4 C17 0.4 21.2 4.8 21.2 10.4 C21.2 14.6 18.6 17 17.4 21.4 H4.6 C3.4 17 0.8 14.6 0.8 10.4 C0.8 4.8 5 0.4 11 0.4 Z" fill="#f0a033"/><rect x="4.8" y="22.8" width="12.4" height="2.4" fill="#b2b5b8"/><path d="M5.4 26.4 H16.6 L15 28.8 H7 Z" fill="#b2b5b8"/></svg>
<div style="left:2760px;top:56px;width:16px;height:1217px;border-radius:8px;background:#404040"></div>
<svg style="left:2744px;top:15px;" width="24" height="20" viewBox="0 0 24 20"><path d="M2 9.6 L8.6 16.2 L22 2.6" fill="none" stroke="#499c54" stroke-width="4"/></svg>
<div style="left:2754px;top:297.7px;width:28px;height:4px;background:#1f6b2b;"></div>
<div style="left:2754px;top:544.1px;width:28px;height:4px;background:#1f6b2b;"></div>
<div style="left:2754px;top:579.3px;width:28px;height:4px;background:#1f6b2b;"></div>
<div style="left:2754px;top:614.5px;width:28px;height:4px;background:#1f6b2b;"></div>
<div style="left:2754px;top:649.7px;width:28px;height:4px;background:#1f6b2b;"></div>
<div style="left:2754px;top:684.9000000000001px;width:28px;height:4px;background:#1f6b2b;"></div>
<div style="left:2754px;top:720.1px;width:28px;height:4px;background:#1f6b2b;"></div>
<div style="left:2754px;top:755.3px;width:28px;height:4px;background:#1f6b2b;"></div>
<div style="left:2754px;top:790.5px;width:28px;height:4px;background:#1f6b2b;"></div>
<div style="left:2754px;top:825.7px;width:28px;height:4px;background:#1f6b2b;"></div>
<div style="left:2754px;top:860.9000000000001px;width:28px;height:4px;background:#1f6b2b;"></div>
<div style="left:2754px;top:896.1000000000001px;width:28px;height:4px;background:#1f6b2b;"></div>
<div style="left:2754px;top:931.3px;width:28px;height:4px;background:#1f6b2b;"></div>
<div style="left:2754px;top:1072.1000000000001px;width:28px;height:4px;background:#1f6b2b;"></div>
<div style="left:2754px;top:1107.3px;width:28px;height:4px;background:#1f6b2b;"></div>
<div style="left:2754px;top:1142.5px;width:28px;height:4px;background:#1f6b2b;"></div>
<div style="left:2754px;top:1177.7px;width:28px;height:4px;background:#1f6b2b;"></div>
<div style="left:2754px;top:1212.9px;width:28px;height:4px;background:#1f6b2b;"></div>
<div style="left:2754px;top:1248.1000000000001px;width:28px;height:4px;background:#1f6b2b;"></div>
<div style="left:2754px;top:1283.3000000000002px;width:28px;height:4px;background:#1f6b2b;"></div>
<div style="left:2754px;top:1318.5px;width:28px;height:4px;background:#1f6b2b;"></div>
<div style="left:2754px;top:1353.7px;width:28px;height:4px;background:#1f6b2b;"></div>
<div style="left:2754px;top:1388.9px;width:28px;height:4px;background:#1f6b2b;"></div>
<div style="left:2754px;top:1424.1000000000001px;width:28px;height:4px;background:#1f6b2b;"></div>
<div style="left:2754px;top:1459.3000000000002px;width:28px;height:4px;background:#1f6b2b;"></div>
</div>
<div style="left:1016px;top:1982px;width:2782px;height:1.5px;background:#4a4b4d;"></div>
<div style="left:1016px;top:1983.5px;width:2782px;height:42.5px;background:#2c2d2f;"></div>
<span class="t " style="left:1035.31px;top:1995.18px;font-size:22.0px;color:#bbbbbb;letter-spacing:1.349px;">IInstanceV1</span>
<div style="left:3798px;top:116px;width:2px;height:1911px;background:#2b2c2e;"></div>
<svg style="left:3807px;top:136px;" width="24" height="26" viewBox="0 0 24 26"><g fill="#9da0a3"><ellipse cx="12" cy="4.6" rx="11.4" ry="4.4"/><path d="M0.6 8.2 C3 12 21 12 23.4 8.2 V11.4 C21 15.4 3 15.4 0.6 11.4 Z"/><path d="M0.6 14.2 C3 18 21 18 23.4 14.2 V17.4 C21 21.4 3 21.4 0.6 17.4 Z"/><path d="M0.6 20.2 C3 24 21 24 23.4 20.2 V21.4 C21 26.6 3 26.6 0.6 21.4 Z"/></g></svg>
<span class="t" style="left:3818.60px;top:170.50px;font-size:23px;color:#bbbbbb;letter-spacing:-0.137px;transform-origin:0 0;transform:rotate(90deg) translateY(-50%);line-height:1">Database</span>
<svg style="left:3807px;top:312px;" width="24" height="27" viewBox="0 0 24 27"><g fill="#9da0a3"><path d="M12 0.6 C17.6 0.6 20.4 4.6 20.4 9.6 V15 L23.6 19.6 V20.8 H0.4 V19.6 L3.6 15 V9.6 C3.6 4.6 6.4 0.6 12 0.6 Z"/><path d="M8.6 22.6 H15.4 C15.4 25 14 26.4 12 26.4 C10 26.4 8.6 25 8.6 22.6 Z"/></g></svg>
<span class="t" style="left:3818.60px;top:347.50px;font-size:23px;color:#bbbbbb;letter-spacing:0.393px;transform-origin:0 0;transform:rotate(90deg) translateY(-50%);line-height:1">Notifications</span>
<span class="t " style="left:3808.58px;top:1919.17px;font-size:22.6px;color:#9da0a3;font-weight:bold;transform:scaleX(1.03);transform-origin:0 0;">M</span>
<span class="t" style="left:3818.20px;top:1952.40px;font-size:23px;color:#bbbbbb;letter-spacing:-0.081px;transform-origin:0 0;transform:rotate(90deg) translateY(-50%);line-height:1">make</span>
<div style="left:0px;top:2026px;width:3840px;height:2px;background:#29292b;"></div>
<div style="left:0px;top:2069px;width:3840px;height:1px;background:#3e3f41;"></div>
<svg style="left:61px;top:2036px;" width="20" height="26" viewBox="0 0 20 26"><g fill="none" stroke="#9da0a3" stroke-width="3"><path d="M4.6 6 V21"/><path d="M15.4 7.6 V9.6 C15.4 14.6 4.6 13.4 4.6 19.4"/></g><g fill="#9da0a3"><circle cx="4.6" cy="4.2" r="3.6"/><circle cx="4.6" cy="21.8" r="3.6"/><circle cx="15.4" cy="6.4" r="3.6"/></g></svg>
<span class="t " style="left:91.81px;top:2037.98px;font-size:22.0px;color:#bbbbbb;letter-spacing:0.900px;">Git</span>
<svg style="left:160px;top:2036px;" width="27" height="27" viewBox="0 0 27 27"><g fill="none" stroke="#9da0a3"><circle cx="10.4" cy="10.4" r="7.8" stroke-width="3.6"/><path d="M15.8 15.8 L24.6 24.6" stroke-width="4"/></g></svg>
<span class="t " style="left:194.31px;top:2037.98px;font-size:22.0px;color:#bbbbbb;letter-spacing:0.460px;">Find</span>
<svg style="left:277.6px;top:2038px;" width="18" height="22" viewBox="0 0 18 22"><path d="M0 0 L17 10.6 L0 21.2 Z" fill="#9da0a3"/></svg>
<span class="t " style="left:308.31px;top:2037.98px;font-size:22.0px;color:#bbbbbb;letter-spacing:-0.190px;">Run</span>
<svg style="left:388px;top:2035px;" width="22" height="26" viewBox="0 0 22 26"><g fill="#9da0a3"><path d="M5.4 1.4 L7 0 L11 4 L15 0 L16.6 1.4 L13 5.6 H9 Z"/><path d="M11 4 C15.8 4 17.8 8 17.8 13.6 C17.8 20.6 15 24.6 11 24.6 C7 24.6 4.2 20.6 4.2 13.6 C4.2 8 6.2 4 11 4 Z"/><rect x="0.6" y="8.6" width="20.8" height="2.4"/><rect x="0.6" y="13.6" width="20.8" height="2.4"/><rect x="0.6" y="18.6" width="20.8" height="2.4"/></g></svg>
<span class="t " style="left:420.01px;top:2037.98px;font-size:22.0px;color:#bbbbbb;letter-spacing:0.987px;">Debug</span>
<svg style="left:529.5px;top:2040px;" width="21" height="18" viewBox="0 0 21 18"><rect x="0" y="0.4" width="3.6" height="3.6" fill="#9da0a3"/><rect x="6.4" y="0.4" width="14.4" height="3.6" fill="#9da0a3"/><rect x="0" y="7.2" width="3.6" height="3.6" fill="#9da0a3"/><rect x="6.4" y="7.2" width="14.4" height="3.6" fill="#9da0a3"/><rect x="0" y="14" width="3.6" height="3.6" fill="#9da0a3"/><rect x="6.4" y="14" width="14.4" height="3.6" fill="#9da0a3"/></svg>
<span class="t " style="left:560.61px;top:2037.98px;font-size:22.0px;color:#bbbbbb;letter-spacing:-0.391px;">TODO</span>
<svg style="left:666.5px;top:2038px;" width="21" height="21" viewBox="0 0 21 21"><circle cx="10.5" cy="10.5" r="10.4" fill="#9da0a3"/><rect x="8.9" y="4.2" width="3.2" height="8" fill="#353638"/><rect x="8.9" y="14" width="3.2" height="3.2" fill="#353638"/></svg>
<span class="t " style="left:697.61px;top:2037.98px;font-size:22.0px;color:#bbbbbb;letter-spacing:0.794px;">Problems</span>
<svg style="left:840.5px;top:2039px;" width="22" height="19" viewBox="0 0 22 19"><rect width="22" height="19" fill="#9da0a3"/><path d="M3.6 4.6 L8.8 9.4 L3.6 14.2" fill="none" stroke="#353638" stroke-width="2.4"/><rect x="10.4" y="12.6" width="7.2" height="2.4" fill="#353638"/></svg>
<span class="t " style="left:872.61px;top:2037.98px;font-size:22.0px;color:#bbbbbb;letter-spacing:0.549px;">Terminal</span>
<svg style="left:1002px;top:2036.5px;" width="26" height="24" viewBox="0 0 26 24"><path d="M7.6 0.6 H18.4 L25.4 12 L18.4 23.4 H7.6 L0.6 12 Z" fill="#9da0a3"/><path d="M9.6 6 L18.4 12 L9.6 18 Z" fill="#353638"/></svg>
<span class="t " style="left:1035.61px;top:2037.98px;font-size:22.0px;color:#bbbbbb;letter-spacing:0.803px;">Services</span>
<svg style="left:23px;top:2078px;" width="26" height="24" viewBox="0 0 26 24"><g fill="none" stroke="#9da0a3" stroke-width="2"><rect x="4.6" y="1" width="19.6" height="17.6"/><path d="M1 5 V22.6 H20.4"/></g></svg>
<span class="t " style="left:86.21px;top:2079.78px;font-size:22.0px;color:#bbbbbb;letter-spacing:0.606px;">Tests passed: 1 (yesterday 15:52)</span>
<span class="t " style="left:3465.41px;top:2079.78px;font-size:22.0px;color:#bbbbbb;letter-spacing:0.900px;">LF</span>
<span class="t " style="left:3515.81px;top:2079.78px;font-size:22.0px;color:#bbbbbb;letter-spacing:1.450px;">UTF-8</span>
<span class="t " style="left:3607.21px;top:2079.78px;font-size:22.0px;color:#bbbbbb;letter-spacing:0.900px;">Tab</span>
<svg style="left:3674px;top:2076px;" width="20" height="28" viewBox="0 0 20 28"><g fill="none" stroke="#9da0a3" stroke-width="3"><path d="M4.4 6 V23"/><path d="M15.6 7.6 V10 C15.6 15.4 4.4 14 4.4 20.4"/></g><g fill="#9da0a3"><circle cx="4.4" cy="4.4" r="3.4"/><circle cx="4.4" cy="23.6" r="3.4"/><circle cx="15.6" cy="6.4" r="3.4"/></g></svg>
<span class="t " style="left:3703.41px;top:2079.78px;font-size:22.0px;color:#bbbbbb;letter-spacing:1.408px;">temp2</span>
<svg style="left:3789px;top:2076px;" width="24" height="24" viewBox="0 0 24 24"><g fill="#9da0a3"><rect x="8.4" y="10.4" width="15" height="12.6"/></g><path d="M1.8 12.4 V7.8 A4.8 4.8 0 0 1 11.4 7.8 V10.6" fill="none" stroke="#9da0a3" stroke-width="3.2"/></svg>
</div>
</body></html>
